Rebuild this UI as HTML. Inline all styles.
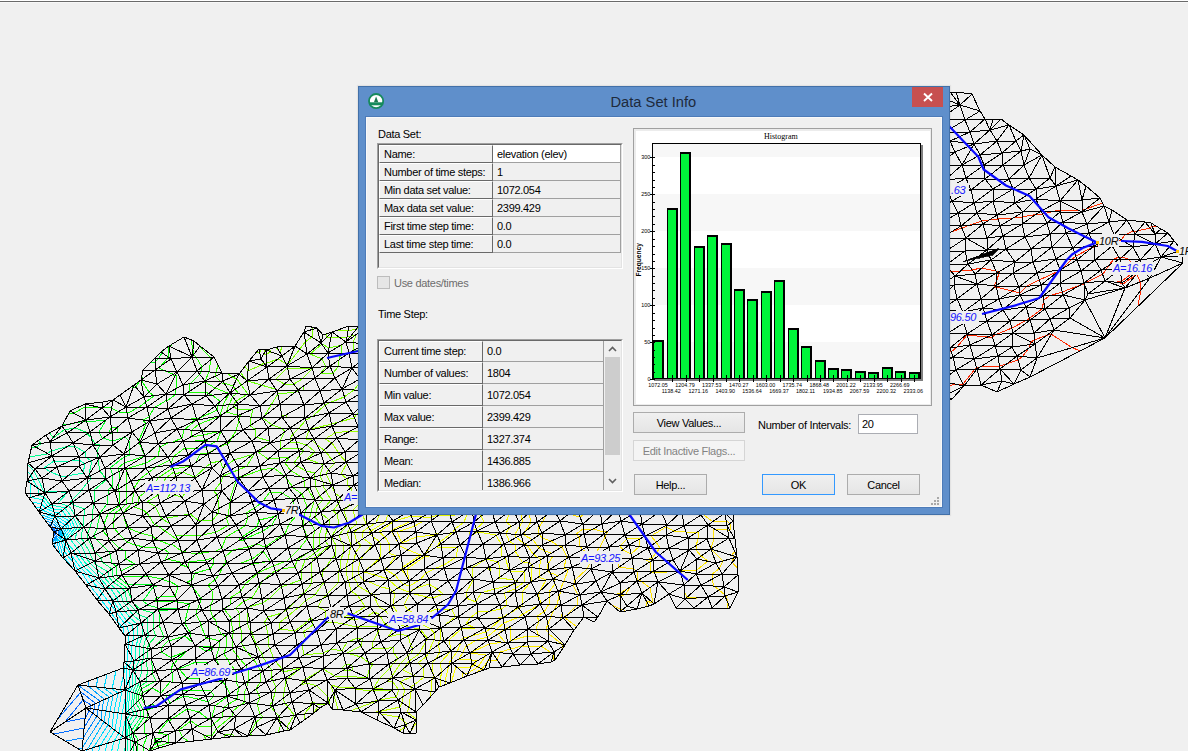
<!DOCTYPE html>
<html><head><meta charset="utf-8">
<style>
*{box-sizing:border-box}
html,body{margin:0;padding:0}
body{width:1188px;height:751px;overflow:hidden;background:#f0f0f0;position:relative;font-family:"Liberation Sans",sans-serif;font-size:11px;color:#000}
.a{position:absolute}
#topline{left:0;top:0;width:1188px;height:3px;border-top:1px solid #fff;border-bottom:1px solid #f8f8f8;background:#6a6a6a}
#mesh{left:0;top:0}
#dlg{left:358px;top:86px;width:592px;height:429px;background:#5f8fcb;border:1px solid #4270a8;box-shadow:0 0 1px 1px rgba(0,0,0,0.05)}
#client{left:366px;top:117px;width:576px;height:390px;background:#f0f0f0;border:1px solid #f9f9f9;box-shadow:0 0 0 1px #4d7bb8}
.t{position:absolute;white-space:nowrap;line-height:13px;letter-spacing:-0.3px}
.g{position:absolute;background:#f0f0f0;border-top:1px solid #a0a0a0;border-left:1px solid #a0a0a0;border-right:1px solid #fff;border-bottom:1px solid #fff}
.gi{position:absolute;left:0;top:0;right:0;bottom:0;border-top:1px solid #696969;border-left:1px solid #696969;border-right:1px solid #e3e3e3;border-bottom:1px solid #e3e3e3}
.btn{position:absolute;border:1px solid #acacac;background:linear-gradient(#f0f0f0,#e5e5e5);text-align:center;line-height:20px;letter-spacing:-0.3px}
</style></head><body>
<div id="topline" class="a"></div>
<svg id="mesh" class="a" width="1188" height="751" viewBox="0 0 1188 751" fill="none" stroke-width="1" shape-rendering="crispEdges">
<path stroke="#00beff" d="M86 757L86 775M96 687L98 678M96 687L109 697M86 757L86 752M106 711L109 697M56 549L54 543M61 529L61 529M61 529L61 529M86 752L87 750M104 722L87 750M104 722L106 711M60 536L54 543M61 529L60 536M61 529L60 528M53 521L60 528M53 521L44 518"/>
<path stroke="#00d5ff" d="M93 765L93 775M104 688L107 675M104 688L113 695M93 765L92 754M110 712L113 695M60 554L57 542M62 531L64 529M63 527L64 529M92 754L93 748M108 725L93 748M108 725L110 712M61 536L57 542M62 531L61 536M63 527L58 524M53 519L58 524M53 519L42 515"/>
<path stroke="#00e2ff" d="M99 774L99 775M112 689L116 671M112 689L118 693M99 774L98 755M114 712L118 693M63 556L59 542M63 533L67 528M65 525L67 528M80 578L76 572M98 755L100 746M112 727L100 746M112 727L114 712M62 537L59 542M63 533L62 537M65 525L56 519M54 517L56 519M40 512L40 512M54 517L40 512M40 512L40 512M40 512L39 512M64 557L63 556M64 557L74 570M76 572L75 571M75 571L74 570"/>
<path stroke="#0063ff" d="M85 718L65 722M83 700L65 722M91 705L83 700M90 708L91 705M90 710L85 718M90 710L90 708M55 533L54 535M55 531L55 533M52 529L55 531"/>
<path stroke="#006cff" d="M84 728L54 734M81 692L57 720M95 703L81 692M94 709L95 703M93 713L84 728M93 713L94 709M56 533L53 538M57 531L56 533M50 527L57 531M50 527L50 527M50 527L50 527"/>
<path stroke="#0086ff" d="M83 738L66 741M79 686L79 685M79 686L100 701M98 710L100 701M97 716L83 738M97 716L98 710M58 534L53 540M58 530L58 534M54 528L58 530M51 525L54 528M51 525L48 524"/>
<path stroke="#00a2ff" d="M82 748L78 749M88 686L89 681M88 686L104 699M102 710L104 699M101 719L82 748M101 719L102 710M59 535L52 543M60 530L59 535M58 528L60 530M52 523L58 528M52 523L46 521"/>
<path stroke="#8dff00" d="M338 504L341 500M342 651L347 642M323 669L323 669M358 638L347 642M369 401L368 404M369 401L372 398M373 391L372 398M379 377L373 391M363 638L358 638M288 616L299 607M288 616L279 623M331 559L335 556M326 568L322 572M331 559L326 568M305 601L299 607M266 354L271 352M368 404L357 414M380 376L379 377M362 346L362 343M362 346L367 346M280 629L279 623M280 629L295 631M306 639L303 632M313 625L312 621M313 620L310 618M313 620L312 621M308 621L310 618M313 625L303 632M308 621L295 631M323 669L335 676M347 653L361 646M347 653L361 657M368 662L361 657M324 582L323 579M324 582L324 582M323 579L322 572M340 497L341 500M340 497L335 493M271 352L269 349M264 349L264 354M264 354L266 354M332 424L339 422M381 375L380 376M383 362L382 353M306 679L323 669M304 680L306 679M304 680L301 685M328 697L329 701M305 719L304 714M371 663L368 662M373 664L371 663M369 670L373 664M369 670L367 678M315 595L305 601M315 595L324 582M382 353L378 348M378 348L367 346M335 556L336 545M331 537L336 545M382 367L383 362M382 367L381 375M326 474L331 484M326 474L328 470M339 422L354 418M354 418L357 414M302 645L306 639M304 655L302 645M330 706L329 701M317 704L327 704M310 704L312 705M304 714L312 705M362 641L363 638M361 646L362 641M339 524L337 514M332 536L339 524M365 331L365 329M361 329L365 329M365 331L364 338M364 338L362 343M333 511L337 514M333 511L338 504M317 445L312 440M326 452L332 460M306 439L312 440M324 450L326 452M324 450L317 445M332 487L335 493M323 653L304 655M323 669L323 669M323 669L323 669M332 649L342 651M323 653L332 649M317 686L328 697M313 702L317 704M307 683L317 686M307 683L301 685M313 702L310 704M347 676L367 678M335 676L347 676M335 463L332 460M328 470L335 463M331 537L331 536M331 536L332 536M337 330L348 331M309 430L306 439M309 430L311 429M332 424L311 429M359 328L361 329M359 328L356 329M356 329L348 331M331 484L331 485M331 485L332 487"/>
<path stroke="#9fff00" d="M352 500L348 507M375 401L374 412M375 401L388 390M360 626L377 627M377 627L378 629M379 629L378 629M340 569L338 571M357 627L360 626M388 390L389 389M374 412L372 414M325 619L325 623M326 611L318 607M326 611L325 619M325 623L333 622M343 624L333 622M343 624L357 627M338 571L338 572M339 582L338 572M351 488L352 500M347 485L351 488M392 353L392 353M387 377L389 389M389 389L389 389M331 685L333 692M393 664L390 668M392 690L374 688M379 679L374 688M390 668L379 679M327 594L339 582M318 607L322 599M326 596L322 599M327 594L326 596M391 352L392 353M391 352L385 344M377 343L385 344M377 343L370 340M343 554L344 546M341 541L344 546M392 354L392 353M387 377L389 371M390 366L392 354M390 366L389 371M364 427L358 432M372 414L369 418M364 427L369 418M334 695L338 709M333 692L334 695M322 707L318 707M318 707L314 712M385 649L372 648M378 632L373 642M372 648L373 642M378 632L379 629M393 664L398 659M394 653L398 659M373 690L392 690M347 485L347 479M341 474L347 479M341 559L340 569M341 559L343 554M372 331L372 324M359 323L372 324M372 331L370 340M338 452L340 455M350 431L358 432M350 431L335 433M332 443L338 452M325 439L335 433M332 443L325 439M393 647L385 649M394 653L393 647M354 688L338 687M338 687L331 685M355 689L370 691M370 691L373 690M355 689L354 688M347 462L347 461M347 463L347 462M347 461L346 462M347 463L341 474M340 455L346 462M341 541L339 535M348 524L339 535M344 510L348 507M348 524L344 510M348 524L348 524M348 524L348 524M358 323L359 323"/>
<path stroke="#ff2800" d="M1132 263L1128 259M1141 289L1140 282M1141 289L1138 306M1117 282L1123 284M1122 281L1117 282M1140 282L1137 274M1137 274L1123 284M1138 269L1132 263M1122 281L1138 269M1103 274L1085 283M1106 270L1109 265M1106 270L1103 274M1084 284L1085 283M1062 292L1083 284M967 335L987 337M1128 259L1122 257M1122 257L1119 257M902 426L903 425M903 425L900 411M899 338L890 346M904 334L899 338M1030 318L1027 320M1030 318L1042 309M1084 284L1084 284M1083 284L1084 284M1012 328L1027 320M995 335L1012 328M980 367L977 368M1114 259L1109 265M1119 257L1114 259M906 333L904 334M906 333L910 331M922 410L929 407M918 406L922 410M880 394L891 383M880 395L893 382M880 396L895 382M891 379L891 383M893 380L893 382M895 381L895 382M1044 300L1042 309M1049 296L1044 300M1049 296L1062 292M992 337L995 335M987 337L992 337M1006 364L1018 360M1000 366L1006 364M1000 366L980 367M891 361L888 347M891 361L892 362M888 347L890 346M924 381L921 379M917 380L902 379M917 380L921 379M967 335L957 347M951 352L957 347M977 368L975 369M963 384L975 369M963 384L957 384M885 407L883 407M886 408L900 411M885 407L886 408M908 394L913 401M908 394L918 385M913 401L918 406M918 385L924 381M930 403L929 407M1071 347L1080 351M1051 334L1071 347M1023 356L1018 360M894 372L891 379M897 372L893 380M897 378L895 381M894 372L892 362M895 364L897 372M902 379L897 378M947 350L951 352M878 411L881 419M880 410L883 419M882 409L885 418M884 408L887 418M931 396L930 403M931 396L942 387M942 387L957 384M1045 336L1034 340M1045 336L1051 334M1023 356L1029 348M1029 348L1030 345M1031 342L1034 340M1031 342L1030 345M942 347L947 350M882 432L883 436M884 433L884 436M886 433L886 435M887 433L887 434M882 432L882 422M884 433L884 421M886 433L886 420M887 433L887 419M881 419L882 422M883 419L884 421M885 418L886 420M887 418L887 419M880 394L875 396M880 395L877 396M880 396L879 396M878 408L878 411M880 408L880 410M882 408L882 409M884 408L884 408M878 408L876 400M880 408L878 399M882 408L880 397M884 408L883 407M875 396L876 400M877 396L878 399M879 396L880 397M933 336L935 340M935 340L942 347M933 332L926 331M933 336L933 332M910 331L926 331"/>
<path stroke="#00eeff" d="M120 690L124 673M120 690L122 691M105 772L103 775M105 772L104 757M118 713L122 691M64 551L61 541M101 600L110 611M111 613L110 611M64 535L69 528M67 523L69 528M99 597L101 600M89 584L82 573M91 587L99 597M91 587L89 584M111 613L118 622M124 634L123 627M121 626L123 627M121 626L118 622M104 757L107 743M115 730L107 743M115 730L118 713M64 538L61 541M64 535L64 538M56 516L67 523M55 515L54 515M56 516L55 515M42 510L54 515M41 508L42 510M41 508L36 507M67 555L64 551M67 555L73 562M82 573L78 570M78 570L73 562M124 673L124 668M124 668L124 666"/>
<path stroke="#ffe100" d="M608 531L606 534M727 599L728 608M726 595L727 599M564 617L567 615M564 617L577 627M578 316L573 318M638 438L641 436M641 436L648 426M711 549L711 549M711 549L711 549M723 561L711 549M719 569L723 561M592 557L582 549M619 596L620 596M626 476L628 464M751 453L751 454M751 454L751 454M726 595L725 595M714 586L712 579M713 529L714 539M711 548L714 539M711 548L711 549M794 454L795 456M794 454L790 451M713 522L727 521M728 530L713 529M730 530L728 530M578 595L573 585M600 547L605 537M600 547L592 557M605 537L606 534M650 588L641 581M626 594L630 587M620 593L630 587M641 581L638 580M637 572L638 580M573 318L576 322M576 322L583 328M630 451L629 462M638 441L638 438M630 451L638 441M602 221L614 210M649 394L652 392M647 402L649 394M681 330L689 334M696 346L689 334M709 346L715 347M695 348L696 346M695 348L688 356M707 376L701 373M707 376L721 375M719 590L725 595M714 586L719 590M794 462L795 456M786 481L778 483M786 481L791 471M790 451L776 456M765 478L778 483M587 569L592 559M587 569L575 580M575 580L574 583M574 583L573 585M578 595L578 596M577 605L567 615M578 596L577 605M653 603L650 588M653 603L646 601M646 601L646 607M617 594L619 596M620 593L617 594M619 567L633 569M637 571L633 569M637 572L637 571M594 338L612 342M597 306L578 316M613 223L614 210M613 223L607 228M689 213L673 218M700 207L712 204M569 248L575 248M573 225L579 224M720 345L722 343M723 357L720 345M718 358L715 347M706 366L718 358M733 358L736 362M733 358L723 357M717 341L709 346M722 343L717 341M646 406L647 402M652 392L655 386M649 380L655 386M649 380L666 373M695 302L700 309M694 297L700 293M694 297L695 302M689 322L681 330M692 319L689 322M700 309L692 319M688 356L691 365M701 373L686 373M691 365L706 366M677 374L686 373M677 374L666 373M752 453L751 453M759 455L752 453M733 169L733 168M770 155L770 158M628 463L628 464M629 462L628 463M700 513L688 507M702 514L700 513M704 515L713 522M702 514L704 515M712 574L719 569M712 574L712 579M772 458L776 456M783 466L794 462M783 466L791 471M766 471L765 478M730 524L730 530M730 524L727 521M685 500L688 507M685 496L685 500M685 496L677 494M657 492L667 493M667 493L677 494M637 484L641 486M637 484L631 481M621 596L626 594M621 596L620 596M616 558L619 567M614 557L616 558M611 554L614 557M611 554L595 558M592 559L595 558M603 532L608 531M607 228L594 235M579 224L585 229M591 231L585 229M591 231L602 221M583 328L587 320M598 307L587 320M601 323L594 338M622 319L601 323M691 210L689 213M691 210L700 207M558 236L556 242M568 244L569 248M556 242L568 244M644 413L646 406M648 426L645 420M644 413L645 420M757 178L757 185M737 183L746 190M737 183L733 169M766 158L770 158M749 173L757 178M746 190L733 203M732 204L731 204M731 204L712 204M730 225L734 229M726 220L717 221M726 220L730 225M714 229L714 238M710 225L717 221M714 229L710 225M764 466L766 471M751 455L759 455M764 466L772 458M751 454L751 455M613 501L612 499M634 488L641 486M651 498L657 492M651 498L640 504M619 497L634 488M580 546L582 549M598 306L601 304M598 307L598 306M597 306L589 298M586 294L589 298M591 287L586 294M609 296L601 304M598 292L609 296M598 292L591 287M594 247L589 249M589 249L575 248M594 247L596 244M594 235L596 244M612 342L623 331M623 331L622 319M654 211L663 218M663 218L673 218M649 208L631 204M651 209L654 211M651 209L649 208M721 375L729 374M781 203L777 207M749 164L740 166M749 173L749 164M755 160L766 158M770 185L757 185M770 185L775 187M741 229L746 226M734 229L741 229M702 273L706 279M707 249L714 238M707 249L707 250M616 501L613 501M624 506L640 504M624 506L616 501M615 497L612 499M626 476L619 482M619 482L631 481M615 497L619 497M591 509L588 501M580 517L591 509M580 517L569 514M594 529L603 532M583 529L594 529M583 529L576 534M579 537L580 546M576 534L579 537M730 371L736 362M729 374L730 371M777 190L775 187M781 203L783 198M777 190L783 198M733 203L733 203M733 203L732 204M766 208L777 207M753 207L766 208M753 207L746 214M746 214L745 223M746 226L745 223M706 285L706 279M700 293L706 285M707 260L707 250M704 264L707 260M702 273L704 264M570 509L569 514M575 504L588 501M575 504L570 509"/>
<path stroke="#ecff00" d="M438 356L439 353M509 570L509 570M509 570L510 571M524 572L510 571M431 517L439 515M502 545L501 544M438 356L431 364M423 372L431 364M509 570L505 557M501 556L505 557M501 556L502 545M524 582L524 572M524 582L515 589M442 672L440 679M451 651L440 663M442 672L440 663M451 651L451 651M423 426L423 425M423 429L423 426M491 314L490 317M490 305L491 314M423 517L431 517M423 517L411 516M439 515L451 516M455 529L453 532M456 557L458 547M444 565L456 557M436 568L444 565M389 565L386 570M395 521L411 516M395 521L393 522M424 390L421 378M423 425L422 425M414 415L422 425M414 411L414 415M423 372L420 376M420 376L421 378M570 412L567 410M449 640L461 629M449 640L451 650M451 650L451 651M417 603L416 603M417 604L416 604M419 604L417 603M419 604L417 604M416 604L416 604M416 604L416 603M455 450L455 461M433 446L428 442M453 450L433 446M424 439L423 429M464 522L455 529M440 542L453 532M458 547L442 548M437 547L442 548M440 542L437 547M426 573L436 568M420 580L409 586M420 580L426 573M403 584L409 586M390 545L385 537M423 395L424 390M418 405L414 411M423 395L422 400M418 405L422 400M504 593L506 599M515 589L504 593M470 618L466 624M491 611L501 609M506 606L501 609M506 606L506 599M440 679L441 686M454 450L455 450M454 450L453 450M455 461L455 461M460 472L455 461M490 317L487 320M476 328L487 320M476 328L472 330M454 341L439 353M459 339L454 341M472 330L459 339M492 300L490 305M424 439L425 439M425 439L428 442M469 537L470 531M476 529L470 531M469 537L478 532M399 580L395 575M399 580L403 584M386 570L395 575M571 413L570 412M478 612L470 618M478 612L491 611M461 629L475 628M475 628L466 624M465 472L460 472M477 496L476 490M498 267L498 266M498 267L499 279M499 279L499 280M501 544L496 535M496 535L478 532M396 556L389 565M389 553L396 556M389 553L390 545M566 413L567 414M567 410L566 413M479 474L477 483M479 474L465 472M477 483L476 490M477 496L474 508M468 512L451 516M464 522L468 512M496 265L498 266M496 265L483 256M493 291L492 300M493 291L499 281M499 280L499 281M476 529L484 522M571 424L567 414M575 422L571 413M575 423L575 422M574 425L575 423M572 425L571 424M572 425L574 425M476 509L481 516M484 522L481 516M476 509L474 508M379 532L385 537M393 522L379 532"/>
<path stroke="#faff00" d="M441 361L446 353M532 568L533 565M445 375L434 368M441 361L440 363M440 363L434 368M515 545L515 551M529 563L533 565M519 557L515 551M529 563L522 562M519 557L522 562M531 580L532 568M531 580L531 582M522 592L530 583M531 582L530 583M449 665L445 681M451 660L449 663M449 665L449 663M451 660L457 652M436 425L429 420M436 430L436 425M509 541L515 545M504 304L504 308M507 316L504 308M423 521L415 526M415 526L397 532M416 521L423 521M416 521L413 521M438 533L436 533M438 533L437 535M436 533L435 535M416 537L435 535M424 557L407 569M424 557L429 556M421 555L403 567M408 550L421 555M403 567L401 569M409 522L413 521M409 522L392 530M496 323L507 316M431 389L445 375M431 390L431 389M429 420L420 411M420 411L420 411M420 411L420 411M461 640L463 638M461 640L461 642M461 642L457 652M436 437L440 440M436 437L436 430M449 442L440 440M512 434L512 435M483 448L480 445M511 435L512 435M489 483L504 473M437 535L437 535M425 555L429 556M437 535L425 555M409 580L407 569M399 544L392 532M400 546L408 550M397 532L402 543M402 543L416 537M431 390L431 390M420 411L420 411M431 390L429 399M420 411L429 399M549 400L545 401M549 400L563 396M542 402L545 401M503 617L498 618M508 614L503 617M519 608L508 614M522 604L522 592M523 606L522 604M519 608L523 606M445 681L445 685M464 441L471 442M464 441L449 442M471 442L480 445M514 434L512 434M536 433L514 434M470 459L476 453M476 453L483 448M472 463L470 459M511 435L512 435M535 437L512 435M535 437L538 437M504 473L507 471M507 471L506 470M489 328L496 323M489 328L475 336M456 345L446 353M469 340L456 345M475 336L469 340M506 296L504 304M489 490L489 483M402 570L409 580M401 569L402 570M541 433L536 433M468 637L463 638M468 637L486 632M498 618L501 619M501 619L490 629M486 632L490 629M528 413L542 402M529 415L528 413M528 413L528 413M528 413L528 413M472 463L480 464M489 497L489 490M559 452L559 450M512 282L507 275M509 288L512 282M509 288L506 296M506 267L505 259M506 267L507 275M506 533L509 541M399 545L400 546M399 545L399 544M548 413L547 413M547 413L529 415M548 413L554 425M490 468L503 470M490 468L480 464M506 470L503 470M489 497L489 498M563 455L559 452M495 255L505 259M495 255L492 253M511 526L506 533M506 522L510 512M506 522L511 526M559 442L559 450M550 436L538 437M550 436L541 433M489 498L491 501M491 501L500 503M500 503L508 509M508 509L510 512M391 531L392 532M392 530L391 531"/>
<path stroke="#fffa00" d="M452 353L449 358M539 569L541 559M462 363L449 358M450 381L456 376M463 364L462 363M463 364L456 376M541 603L538 594M533 554L537 557M537 557L541 559M533 554L527 545M539 569L539 577M471 667L474 665M477 661L471 660M477 661L474 665M456 667L451 683M471 667L456 667M463 652L459 659M459 659L471 660M442 419L436 414M516 537L523 543M479 341L478 341M498 342L479 341M504 332L512 328M504 332L499 341M518 325L512 328M441 390L436 398M450 381L441 390M432 411L436 414M432 411L435 403M538 594L540 591M546 580L540 591M546 580L539 577M541 604L540 604M541 604L541 603M466 646L463 652M477 640L466 646M519 617L504 623M537 606L540 604M450 420L442 419M500 344L498 342M500 344L499 341M511 430L497 437M491 439L494 442M494 442L497 437M504 485L507 483M556 390L560 388M542 393L556 390M528 401L542 393M523 614L519 617M523 614L537 606M487 438L491 439M436 399L436 398M435 403L436 399M476 432L487 438M524 425L511 430M521 498L525 502M519 454L535 452M507 483L524 471M524 471L517 464M535 461L535 452M528 469L535 461M457 349L452 353M478 341L457 349M529 293L528 293M513 254L510 253M514 263L513 254M504 488L504 485M504 488L508 489M487 637L477 640M504 623L497 629M487 637L497 629M454 424L450 420M452 432L454 424M467 430L452 432M476 432L467 430M523 405L528 401M524 425L521 417M523 405L516 414M521 417L516 414M515 494L508 489M515 494L521 498M527 545L526 544M526 544L523 543M528 296L529 293M528 296L519 305M522 311L519 305M522 311L518 325M524 282L524 283M524 283L528 293M524 282L521 277M521 277L514 270M514 268L514 263M514 268L514 270M515 534L516 537M500 463L502 463M504 460L500 459M497 461L500 459M500 463L497 461M517 464L502 463M504 460L519 454M501 250L510 253M522 522L520 526M520 526L515 534M522 519L522 522M520 509L525 502M522 519L520 509M543 464L528 469M557 467L543 464M557 467L566 465"/>
<path stroke="#ff2b00" d="M1060 270L1061 270M1152 226L1158 227M1027 286L1039 280M1059 271L1039 280M1059 271L1060 270M1061 270L1062 269M1091 248L1076 256M897 298L893 299M918 297L935 288M897 298L918 297M904 307L897 306M881 334L883 332M882 344L882 347M882 344L881 334M893 301L893 299M935 288L935 288M972 270L961 271M1012 291L1020 293M1020 293L1027 286M1094 247L1091 248M1094 247L1097 246M1071 260L1062 269M1071 260L1076 256M1150 228L1152 226M900 309L904 307M899 310L900 309M899 310L901 324M883 332L901 324M879 391L888 383M887 376L888 383M893 301L893 301M893 301L897 306M935 288L951 271M935 288L935 288M961 271L951 271M996 287L1012 291M996 287L995 287M999 273L999 272M997 280L999 273M996 271L999 272M996 271L981 268M981 268L972 270M1137 231L1133 231M1137 231L1150 228M883 349L882 347M885 361L883 349M885 361L888 364M994 286L995 287M994 286L997 280M1113 240L1097 246M1125 235L1133 231M1121 240L1113 240M1125 235L1121 240M890 371L887 376M890 371L888 364M875 414L876 419M879 432L879 438M879 432L879 425M876 419L879 425M879 391L870 396M874 409L875 414M874 409L873 403M870 396L873 403"/>
<path stroke="#00ffe9" d="M114 601L114 601M117 766L111 775M117 766L116 760M66 541L66 540M119 610L114 601M66 539L75 528M71 519L75 528M105 589L104 588M105 589L114 601M105 589L105 589M96 580L94 576M96 580L104 588M120 612L119 610M132 625L133 630M127 621L132 625M127 621L120 612M116 760L120 739M125 721L125 715M122 736L120 739M125 721L122 736M126 713L128 691M66 539L66 540M66 539L66 539M66 516L71 519M62 510L53 509M66 516L62 510M48 507L53 509M43 500L48 507M30 497L43 500M30 483L31 493M30 497L31 493M27 478L28 479M128 691L130 688M125 715L126 714M74 551L68 544M75 553L74 551M68 544L66 541M133 636L133 630M133 641L133 636M133 641L132 645M131 657L131 661M131 657L132 645M126 714L126 713M126 714L126 714M94 576L84 567M76 555L84 567M76 555L75 553M29 481L28 479M30 483L29 481M129 680L129 669M130 688L129 680M129 667L129 669M129 667L131 661"/>
<path stroke="#00ffcc" d="M118 601L117 598M122 763L115 775M122 763L122 761M122 608L118 601M70 539L70 537M78 527L70 537M73 517L78 527M108 587L100 578M111 589L117 598M108 587L111 589M125 611L122 608M137 624L137 626M130 618L137 624M130 618L125 611M125 748L122 761M126 738L127 719M128 711L130 692M71 516L73 517M65 508L52 505M71 516L65 508M50 505L52 505M44 497L50 505M38 495L44 497M38 488L38 493M38 495L38 493M27 471L31 475M126 738L126 738M126 738L125 748M130 692L133 686M127 719L130 715M100 578L100 577M77 548L70 539M80 553L77 548M138 636L137 626M138 639L138 636M138 639L136 646M136 646L135 660M129 713L128 711M130 715L129 713M100 577L99 577M99 577L87 565M81 557L87 565M81 557L80 553M33 480L31 475M38 488L33 480M135 661L135 660M133 666L135 661M132 673L132 670M133 686L132 673M132 669L132 670M133 666L132 669"/>
<path stroke="#00ffaf" d="M123 601L121 595M126 765L119 775M127 763L126 765M127 763L127 761M126 606L123 601M75 539L77 532M81 527L77 532M58 503L68 492M76 515L76 516M76 516L81 527M110 584L104 577M116 589L121 595M110 584L116 589M130 611L126 606M133 615L141 622M133 615L130 611M142 623L142 622M142 622L141 622M127 736L129 722M131 708L133 692M85 464L79 460M70 461L79 460M76 515L76 515M76 515L75 515M69 506L58 503M69 506L75 515M54 461L70 461M54 461L44 468M61 492L68 492M28 465L34 471M128 739L127 736M127 758L127 761M128 739L127 758M133 692L136 684M129 722L133 715M104 577L104 575M81 545L75 539M85 553L81 545M67 476L60 476M47 491L61 492M83 473L85 464M67 476L83 473M142 625L142 623M143 635L142 625M142 636L143 635M142 636L139 647M139 647L139 657M133 712L131 708M133 715L133 712M104 575L97 570M97 570L90 563M87 559L90 563M87 559L85 553M51 472L60 476M47 491L44 492M51 472L44 468M38 479L34 471M44 492L38 479M139 660L139 657M136 670L135 675M136 668L139 660M136 668L136 670M135 675L136 684"/>
<path stroke="#00fe8e" d="M127 601L125 592M127 769L124 775M131 764L127 769M131 764L131 759M129 604L127 601M81 538L83 527M83 527L83 527M72 500L81 491M72 500L70 503M84 515L83 527M83 527L83 527M113 582L108 576M122 588L125 592M113 582L122 588M135 610L129 604M136 612L139 615M136 612L135 610M147 623L148 618M148 618L139 615M129 735L130 726M133 705L135 693M92 461L85 457M85 509L84 515M85 509L73 505M72 503L70 503M72 503L73 505M47 454L51 451M29 457L47 454M85 457L85 452M131 740L129 735M130 752L131 759M131 740L130 752M135 693L139 683M130 726L137 716M108 576L108 572M84 542L81 538M90 553L84 542M92 461L89 474M91 479L87 483M87 483L81 491M69 446L51 451M69 446L74 446M85 452L74 446M149 636L148 633M149 636L146 638M148 633L147 623M146 638L143 648M143 648L143 655M136 711L133 705M137 716L136 711M108 572L95 564M95 564L94 562M93 561L94 562M93 561L90 553M90 477L91 479M90 477L89 474M143 660L143 655M142 670L139 681M141 665L143 660M141 665L142 670M139 681L139 683"/>
<path stroke="#00fd59" d="M132 601L128 590M129 773L128 775M134 765L129 773M134 765L134 757M132 602L132 601M90 527L92 521M87 538L88 533M88 533L90 527M92 514L92 521M75 428L86 432M116 580L112 576M127 588L128 590M116 580L127 588M132 602L133 603M133 603L140 609M143 610L140 609M153 622L153 613M143 610L153 613M131 734L132 730M136 703L137 694M94 551L96 553M99 457L97 457M94 504L92 514M36 447L41 444M31 448L36 447M39 441L41 444M97 451L97 457M133 741L131 734M133 746L134 757M133 741L133 746M140 686L137 694M132 730L141 717M112 576L112 569M88 539L87 538M88 539L94 551M99 457L98 460M106 479L106 480M86 432L87 434M87 434L91 437M64 430L53 438M50 433L53 438M64 430L75 428M100 445L97 451M156 636L153 629M156 636L149 644M153 629L153 622M149 644L147 649M147 649L147 652M140 710L136 703M141 717L140 710M94 490L106 480M94 502L94 490M96 553L96 553M102 562L112 569M101 558L96 553M101 558L102 562M100 471L106 479M100 471L98 460M95 444L91 437M100 445L95 444M147 659L147 652M148 671L146 678M146 662L147 659M146 662L148 671M147 682L146 678M147 682L140 686M94 503L94 504M94 503L94 502"/>
<path stroke="#50ff00" d="M224 738L225 735M297 560L312 550M241 385L248 394M241 385L237 379M232 734L225 735M260 698L258 693M313 537L315 531M313 537L313 549M295 567L297 560M312 525L315 531M182 472L195 477M243 646L241 642M239 613L239 622M260 585L261 583M242 633L241 642M242 633L240 627M239 622L240 627M313 550L312 550M313 549L313 550M232 377L237 379M227 373L232 377M261 672L261 671M175 474L182 472M263 581L261 583M275 571L281 569M281 569L295 567M217 495L214 491M206 467L195 477M211 463L206 467M211 463L220 461M260 682L256 689M260 682L261 672M258 693L256 689M261 671L254 660M252 658L254 660M252 658L247 652M247 652L243 646M256 722L263 717M250 734L256 722M250 734L252 735M263 717L260 714M257 704L260 698M260 714L257 704M213 520L218 513M218 500L217 495M202 521L213 520M198 520L190 514M202 521L198 520M164 491L165 485M189 514L184 515M190 514L189 514M167 518L184 515M272 573L263 581M272 573L275 571M309 521L312 525M270 443L270 442M218 509L218 513M218 509L218 500M235 737L232 734M236 608L239 613M269 441L270 442M223 476L221 482M221 482L214 491M220 461L223 468M244 601L236 608M244 601L252 598M260 585L252 598M254 454L234 460M223 468L234 460M238 470L223 476M256 437L269 441M285 463L290 457M308 489L314 500M314 500L314 501M311 512L309 521M314 501L311 512M250 426L255 429M255 429L256 437M258 452L270 443M270 443L270 443M279 458L290 457M305 487L304 480M305 487L308 489M253 409L251 417M251 417L250 426M268 459L258 452M268 459L279 458M247 466L254 454M247 466L238 470M285 463L291 471M291 471L302 477M302 477L304 480M238 409L253 409M236 401L248 394M238 409L233 407M236 401L234 404M233 407L234 404"/>
<path stroke="#00fb25" d="M134 772L133 775M138 767L134 772M138 767L138 755M151 362L155 362M152 584L154 585M152 584L134 584M153 587L143 601M97 528L100 514M94 536L97 528M94 536L96 539M100 514L100 514M86 422L106 420M84 421L86 422M134 584L128 585M118 577L117 575M118 577L128 585M143 601L148 605M157 586L153 587M157 586L154 585M160 608L158 608M148 605L158 608M159 611L159 622M138 700L139 695M96 539L103 546M100 513L100 514M159 358L155 362M159 358L162 353M162 353L162 351M124 457L130 455M129 450L130 455M177 609L159 611M177 609L160 608M153 648L152 649M137 743L137 752M134 733L138 740M137 743L138 740M137 752L138 755M141 689L139 695M134 732L134 733M134 732L144 717M198 668L199 668M199 669L199 668M199 669L199 669M199 669L198 669M198 669L198 669M198 668L198 669M117 575L116 566M71 424L63 425M71 424L84 421M129 441L129 450M125 437L129 441M164 637L159 625M164 637L153 648M159 625L159 622M143 710L138 700M144 717L143 710M112 487L108 490M108 495L108 490M112 487L113 475M109 552L103 546M112 563L116 566M110 554L109 552M110 554L112 563M110 468L113 475M124 457L110 468M102 438L99 432M113 441L102 438M99 432L106 420M113 441L125 437M151 652L152 649M151 658L151 652M153 671L152 673M151 659L151 658M151 659L153 671M156 681L152 673M156 681L141 689M107 504L100 513M107 504L108 495"/>
<path stroke="#04fa00" d="M141 769L139 775M141 767L141 769M141 767L143 757M161 739L155 738M157 743L161 742M161 739L161 742M112 541L111 540M147 576L162 579M147 576L144 576M156 598L155 600M104 524L104 529M108 537L111 540M103 531L104 529M103 531L108 537M173 374L165 371M128 413L119 412M144 576L122 576M121 575L121 575M121 575L122 576M155 600L155 601M175 596L160 597M160 597L156 598M162 579L169 582M173 602L157 601M155 601L157 601M143 757L143 753M154 745L157 743M154 745L155 738M141 697L141 695M85 407L74 413M119 412L111 408M132 386L133 388M167 359L159 368M165 371L159 368M167 359L168 357M168 357L169 346M175 377L173 374M124 463L145 456M139 443L145 456M169 640L162 647M143 747L143 753M145 733L147 736M143 747L147 736M142 693L141 695M144 723L145 733M144 723L148 718M104 524L108 514M121 571L135 564M126 559L135 564M121 571L121 575M99 407L102 407M99 407L85 407M102 407L111 408M102 407L102 407M68 414L74 413M142 377L142 379M141 380L142 379M154 408L167 400M128 413L139 407M139 440L139 443M146 707L141 697M147 710L148 718M146 707L152 704M156 707L152 704M156 707L147 710M173 663L171 670M119 471L119 482M125 551L119 548M125 551L126 559M119 548L112 541M118 468L119 471M124 463L118 468M154 396L149 392M146 402L154 396M141 380L149 392M136 387L140 380M136 387L133 388M146 402L139 407M149 417L154 408M146 424L139 440M149 417L143 420M146 424L143 420M110 433L109 432M112 433L110 433M109 432L111 428M112 433L117 432M118 427L111 428M117 432L118 427M162 647L161 652M161 652L172 658M171 670L172 673M170 682L161 693M152 688L161 693M152 688L142 693M118 488L119 482M118 488L119 491M119 506L108 514M119 491L120 505M119 506L119 505M120 505L119 505"/>
<path stroke="#15fb00" d="M146 774L145 775M148 761L146 774M148 761L149 759M168 735L158 733M158 746L169 743M168 735L169 743M124 539L119 534M114 528L119 534M149 759L149 751M150 750L158 746M150 750L151 746M169 719L158 733M149 751L149 751M149 751L151 746M113 523L114 528M113 523L115 513M168 553L165 561M168 409L168 409M168 443L160 447M160 447L158 456M129 468L146 463M146 463L158 456M127 542L135 545M127 542L124 539M155 547L144 547M144 547L135 545M155 547L163 550M168 409L168 409M168 409L168 409M126 470L129 468M126 484L126 470M126 484L126 491M121 509L115 513M126 491L127 498M121 509L126 504M127 498L126 504"/>
<path stroke="#00fbff" d="M111 769L107 775M111 769L110 758M125 699L122 714M65 546L63 540M107 600L112 606M116 612L112 606M65 537L72 528M69 521L72 528M102 593L107 600M93 582L88 575M98 588L102 593M98 588L93 582M116 612L116 612M127 626L129 633M124 623L127 626M124 623L116 612M110 758L114 741M119 733L114 741M119 733L122 714M125 699L126 690M65 539L63 540M65 537L65 539M61 516L69 521M59 513L54 512M61 516L59 513M45 508L54 512M42 504L45 508M42 504L32 502M126 690L126 689M71 554L65 546M71 554L71 555M129 636L129 633M128 643L129 636M128 643L128 645M128 649L127 662M128 649L128 645M88 575L81 568M81 568L71 555M126 687L126 669M126 689L126 687M126 664L126 669M126 664L127 662"/>
<path stroke="#05fa00" d="M213 647L212 650M192 642L190 634M199 647L211 646M183 690L166 696M185 636L192 642M188 690L183 690M206 651L212 650M199 647L206 651M213 646L211 646M213 646L213 647M170 347L172 344M169 347L170 347M176 389L175 395M176 389L176 375M174 601L178 602M169 641L185 636M214 696L211 691M203 690L211 691M203 690L188 690M198 699L184 696M196 662L207 663M210 669L207 663M199 679L210 669M199 679L187 678M187 678L179 669M196 662L179 669M172 657L187 651M177 660L187 651M177 660L174 665M167 401L175 395M166 696L170 703M170 703L184 696M208 702L214 696M208 702L198 699M172 682L173 672M178 586L175 597M178 586L169 581M190 632L190 634M185 624L190 632M188 609L185 622M185 624L185 622M190 604L178 602M188 609L190 604"/>
<path stroke="#17fc00" d="M219 647L216 658M229 696L229 695M205 636L206 638M206 638L209 638M242 537L257 527M206 392L189 392M212 395L220 401M211 719L211 719M212 718L211 719M230 694L229 695M230 694L226 686M216 659L216 658M220 667L216 659M209 719L211 719M220 672L219 681M219 641L209 638M219 641L219 647M197 418L191 419M197 418L200 418M209 394L206 392M209 394L212 395M190 384L189 392M194 355L196 357M193 350L194 355M193 350L191 340M200 418L217 410M212 717L212 718M227 697L229 696M223 682L226 686M219 681L223 682M221 670L220 667M221 670L220 672M169 553L164 549M247 538L263 531M239 541L244 540M244 540L247 538M213 558L205 560M210 569L195 573M200 374L190 384M196 357L202 367M201 371L202 367M201 371L200 374M204 440L195 441M191 419L195 421M184 430L195 421M184 430L182 438M182 438L173 442M259 520L257 527M195 441L203 442M203 442L205 442M172 719L169 721M187 709L172 719M207 718L209 719M215 706L227 697M215 706L212 717M199 712L207 718M199 712L187 709M240 538L242 537M240 538L239 541M189 562L205 560M189 562L188 567M188 567L181 565M180 562L181 565M180 562L167 559M214 563L210 569M214 563L213 558M205 442L207 441M277 516L259 520M191 585L191 586M192 580L195 573M191 585L187 582M192 580L187 582M207 439L204 440M207 441L207 439M272 525L277 516M263 531L272 525M201 625L205 636M200 622L201 625M197 610L196 614M200 622L196 614M201 600L201 598M200 603L201 600M194 589L201 598M194 589L191 586M200 603L197 610M218 406L220 401M217 410L218 406"/>
<path stroke="#29fd00" d="M226 647L224 654M235 670L236 673M237 699L237 695M238 530L245 526M205 382L204 382M228 393L229 394M211 727L214 724M222 717L214 724M236 682L236 673M239 688L237 695M239 688L236 682M235 670L230 664M228 660L224 654M230 664L228 660M190 742L183 738M179 730L183 738M198 726L211 727M226 636L221 634M226 636L226 647M270 561L263 551M215 388L205 382M215 388L228 393M204 381L204 382M199 346L210 357M199 345L199 346M220 416L220 416M223 711L222 717M229 704L237 699M184 551L181 551M184 551L186 552M172 544L181 551M265 547L281 536M263 551L252 559M233 550L248 547M257 544L248 547M257 544L265 547M202 553L216 551M215 580L219 575M205 381L204 381M210 357L211 359M209 372L211 359M209 372L205 381M191 437L203 435M199 424L220 416M192 430L199 424M192 430L191 437M245 526L248 517M246 513L248 517M255 508L246 513M185 448L194 449M194 449L206 447M185 448L174 456M171 463L174 456M191 721L179 730M191 721L198 726M224 707L229 704M224 707L223 711M222 548L216 551M226 537L238 530M222 548L226 537M186 552L196 554M196 554L202 553M254 564L270 561M250 564L254 564M219 575L223 566M225 563L223 566M225 563L225 557M225 557L233 550M252 559L241 563M241 563L250 564M206 447L217 441M208 585L215 580M221 431L203 435M217 441L221 431M285 534L281 536M289 524L285 534M213 617L216 621M217 626L221 634M217 626L216 621M298 513L293 502M297 515L289 524M297 515L298 513M210 610L210 606M210 610L213 617M255 508L263 501M292 499L293 502M282 493L292 499M213 600L212 591M213 600L210 606M208 585L212 591M223 405L229 394M220 416L223 405M270 492L282 493M270 492L263 501"/>
<path stroke="#3bff00" d="M232 647L232 649M235 389L238 393M235 389L233 386M245 702L244 694M226 518L229 525M307 537L307 536M307 537L307 539M304 529L307 536M304 529L302 526M212 736L216 729M232 716L216 729M247 686L244 694M236 654L232 649M203 735L207 740M212 736L203 735M191 466L191 466M232 619L231 621M232 639L232 647M233 633L232 639M233 633L233 631M231 621L233 631M291 557L287 561M299 549L291 557M307 539L299 549M220 381L215 376M222 383L220 381M222 383L224 383M224 383L233 386M233 711L232 716M239 706L233 711M245 702L239 706M249 681L248 670M173 469L191 466M273 566L287 561M216 372L218 365M216 372L215 376M201 431L202 431M204 429L202 430M201 431L202 430M201 431L201 431M200 454L196 462M200 454L208 453M192 466L191 466M192 466L196 462M248 683L247 686M248 683L249 681M248 670L246 666M240 659L246 666M240 659L236 654M228 515L226 518M197 535L203 535M197 535L183 536M203 535L216 532M216 532L229 525M183 536L175 535M258 573L257 574M257 574L245 584M258 573L273 566M219 447L208 453M219 447L227 444M230 503L228 515M230 503L230 499M230 499L236 481M224 609L232 619M238 478L236 481M205 431L202 431M205 431L204 429M302 526L302 526M230 605L224 609M230 605L230 598M230 598L241 591M241 591L245 584M239 477L238 478M230 442L227 444M302 494L304 499M304 499L307 507M305 512L303 525M307 507L305 512M303 525L302 526M236 431L230 440M230 442L230 440M292 487L292 486M292 487L302 494M240 415L240 416M239 420L240 416M239 420L236 431M261 470L274 468M244 476L239 477M261 470L244 476M283 475L274 468M286 478L292 486M237 415L240 415M233 396L238 393M237 415L226 412M233 396L229 405M226 412L229 405M284 476L286 478M284 476L283 475"/>
<path stroke="#7aff00" d="M346 664L342 668M316 557L313 559M316 557L329 546M248 371L245 366M305 368L311 368M264 623L266 625M329 546L325 541M325 537L327 530M325 537L325 541M286 610L288 609M286 610L282 613M312 562L313 559M312 562L311 573M311 573L311 578M298 599L288 609M288 364L300 349M288 364L285 363M278 359L267 363M248 371L261 365M278 359L285 363M361 381L354 390M362 379L361 381M354 350L353 343M354 350L371 352M312 368L311 368M312 368L312 368M331 338L338 337M331 338L327 337M268 634L266 625M342 668L344 670M286 681L284 693M269 637L268 634M268 617L264 623M282 613L268 617M351 665L346 664M353 667L351 665M301 595L304 593M301 595L298 599M312 583L311 578M304 593L312 583M287 368L276 379M284 384L276 379M284 384L294 384M287 368L305 368M312 337L305 342M305 342L300 349M280 352L275 347M280 352L282 347M260 352L260 349M264 363L267 363M260 352L257 352M264 363L261 365M344 397L354 390M329 403L344 397M325 405L329 403M363 378L362 379M372 354L371 353M366 368L372 354M363 378L366 368M312 369L312 368M302 379L294 384M302 379L312 369M312 330L313 327M312 330L312 337M287 679L301 668M287 679L286 681M288 707L294 715M287 727L294 715M287 727L288 730M268 645L269 637M352 670L353 667M371 353L371 352M371 352L371 352M320 476L323 482M320 476L323 465M326 334L327 337M282 669L276 662M282 669L283 672M282 669L282 669M283 672L301 668M270 649L268 645M273 657L276 662M270 649L273 657M285 703L288 707M283 699L284 693M285 703L283 699M330 524L329 520M327 530L330 524M353 343L356 335M321 464L323 465M321 512L321 513M329 520L321 513M315 452L307 445M307 459L315 452M307 459L321 464M307 445L296 442M290 439L293 434M286 415L282 416M313 416L325 405M286 417L283 417M286 417L286 415M326 491L331 500M321 512L331 500M347 670L352 670M344 670L347 670M347 337L338 337M282 417L283 417M293 434L298 429M306 420L298 429M306 420L313 416M356 335L351 336M351 336L347 337M281 417L282 416M281 417L282 417M323 482L323 486M323 486L326 491M321 512L321 512M321 512L321 512M290 442L290 439M290 442L296 442"/>
<path stroke="#65ff00" d="M315 553L305 560M315 553L321 548M248 381L261 385M247 381L240 372M250 630L252 633M321 548L319 545M319 537L322 526M319 537L319 545M301 571L305 560M301 571L301 573M301 580L301 573M301 580L287 585M321 525L322 526M275 389L261 385M278 394L296 392M248 380L248 381M248 380L247 381M333 373L338 367M338 367L339 360M322 344L310 354M322 359L310 354M322 359L326 367M341 353L339 360M341 353L342 345M329 348L342 345M329 348L322 344M252 634L252 633M275 692L276 687M256 644L252 634M247 608L247 622M249 607L262 603M247 623L250 630M247 622L247 623M281 587L287 585M269 599L281 587M262 603L269 599M277 390L275 389M277 390L298 390M326 367L320 374M320 374L333 373M303 390L303 386M303 386L298 390M281 724L278 733M279 716L280 717M279 719L280 717M281 724L279 719M186 492L182 490M177 484L182 490M256 644L256 644M314 477L315 479M314 477L315 473M299 391L303 390M296 392L299 391M205 503L204 503M273 681L276 687M272 670L269 667M271 678L273 681M271 678L272 670M262 654L256 644M263 657L269 667M262 654L263 657M275 712L279 716M273 701L275 692M275 712L271 707M270 705L273 701M271 707L270 705M205 504L205 503M204 504L204 504M204 504L205 504M175 492L177 484M201 503L204 504M182 497L174 495M201 503L204 503M182 497L186 492M306 471L315 473M315 517L321 525M304 451L301 449M300 455L304 451M301 449L298 448M280 441L285 431M320 496L323 500M318 505L323 500M247 608L247 608M281 428L285 431M272 425L281 428M247 607L247 608M247 607L249 607M263 418L264 417M263 418L272 425M294 463L300 455M315 479L315 486M315 486L320 496M316 512L315 517M318 505L316 512M271 405L264 417M278 394L271 405M281 449L280 441M281 449L298 448M294 463L297 466M297 466L306 471"/>
<path stroke="#ffd300" d="M811 459L816 471M658 426L658 426M658 426L653 440M736 552L734 552M732 555L734 552M732 555L734 557M732 562L738 569M732 562L734 557M649 464L649 463M620 609L612 605M738 453L740 444M737 441L740 444M737 441L742 428M725 404L721 417M740 460L738 453M803 447L810 456M799 443L803 447M643 446L653 440M649 463L638 456M638 452L638 456M638 452L643 446M714 310L714 303M718 317L714 310M718 317L725 321M680 406L676 408M703 392L691 400M703 392L709 389M691 400L680 406M742 428L743 428M772 425L783 423M739 410L721 417M788 149L787 150M787 150L786 163M735 475L728 477M717 483L728 477M790 426L783 423M809 458L811 459M810 456L809 458M674 478L683 483M671 478L674 478M730 346L738 332M731 351L730 346M739 351L750 352M731 351L739 351M725 321L726 325M736 332L738 332M736 332L726 325M709 298L714 303M725 404L724 398M716 391L724 398M743 428L743 428M758 419L743 428M770 419L772 425M768 415L770 419M787 165L786 163M787 165L792 176M706 482L717 483M706 482L694 486M683 483L694 486M666 476L671 478M655 475L666 476M655 475L651 466M651 466L649 464M623 609L620 609M625 611L623 609M700 182L708 177M697 183L700 182M652 413L653 411M662 411L653 411M658 426L652 414M652 413L652 414M662 411L676 408M742 392L747 397M793 179L792 176M743 467L740 460M743 467L735 475M665 198L678 198M653 197L665 198M684 195L697 183M684 195L678 198M794 431L790 426M797 438L794 431M799 443L797 438M756 359L750 352M750 405L747 397M739 410L750 405M760 414L758 419M768 415L760 414M741 388L742 392M716 391L717 388M717 388L709 389M742 383L741 388M764 231L753 237M735 244L727 244M725 249L727 244M744 365L756 359M744 365L740 370M738 377L740 370M742 383L738 377M798 188L793 179M800 192L798 188M799 205L799 204M800 192L799 204M746 242L753 237M746 242L735 244M716 275L717 272M716 275L715 285M710 292L709 298M710 292L715 285M725 249L724 252M798 206L792 214M798 206L799 205M717 270L717 272M718 260L724 252M718 260L717 270M784 224L792 214M782 225L784 224M782 225L764 231"/>
<path stroke="#fff200" d="M548 564L553 556M539 316L540 313M547 569L548 564M524 353L522 341M541 326L539 316M540 332L522 341M452 388L464 376M468 371L464 376M550 596L549 592M539 548L545 551M539 548L537 545M547 569L547 571M468 673L478 667M486 655L470 653M486 655L478 667M463 673L462 678M468 673L463 673M470 653L470 653M470 653L470 653M489 644L470 653M505 642L489 644M505 642L498 634M543 329L540 332M543 329L541 326M550 359L542 366M550 359L566 358M484 366L468 371M484 366L485 365M507 411L516 401M519 394L516 401M519 394L527 389M450 389L450 390M452 388L450 389M555 584L549 592M547 571L551 573M559 576L551 573M549 604L544 612M549 604L550 596M470 653L470 653M470 653L470 653M511 626L505 629M544 612L537 616M510 641L510 630M527 636L510 641M510 630L511 626M536 629L539 621M537 616L539 621M466 411L466 409M487 365L485 365M487 365L507 358M524 354L507 358M524 354L524 353M509 426L501 430M527 389L527 383M530 378L535 373M530 378L527 383M535 373L542 366M539 636L536 629M539 636L527 636M463 409L444 408M445 400L450 390M444 408L445 400M463 409L466 409M489 422L491 421M490 422L501 430M490 422L491 421M515 424L509 426M525 269L523 264M541 293L533 288M521 251L511 247M522 260L523 264M522 260L521 251M505 629L503 630M503 630L498 634M472 420L466 411M472 420L489 422M515 424L513 420M504 414L507 411M513 420L504 414M525 487L524 487M525 487L527 489M526 486L524 487M551 553L545 551M537 545L533 540M524 535L533 540M537 303L537 306M541 293L537 303M537 306L540 313M530 276L531 282M531 282L533 288M530 276L525 269M524 535L525 532M510 247L511 247M531 522L525 532M536 495L527 489M539 497L536 495M529 513L531 522M533 501L539 497M533 501L528 508M529 513L528 508M545 473L542 473M547 473L545 473M547 473L566 470M526 486L542 473"/>
<path stroke="#ffeb00" d="M567 557L566 559M549 316L553 307M472 382L466 389M548 624L551 616M490 661L489 659M490 661L497 660M523 366L515 362M544 342L544 344M477 377L472 382M550 319L549 316M546 341L544 342M482 669L475 673M489 659L482 669M558 331L546 341M558 331L550 319M544 344L547 345M554 349L547 345M488 373L477 377M488 373L502 366M523 370L523 366M508 388L507 398M515 380L508 388M502 405L505 402M505 402L507 398M568 570L564 568M557 605L554 610M559 596L557 605M551 616L554 610M562 647L564 647M553 661L553 654M552 653L553 654M546 629L548 624M522 646L511 649M500 652L497 660M511 649L500 652M487 413L502 405M479 412L476 400M509 363L502 366M515 362L509 363M518 376L523 370M518 376L515 380M548 289L554 289M556 292L558 300M546 629L549 634M563 645L549 634M563 645L562 647M459 401L455 401M456 397L455 400M455 401L455 400M456 397L466 389M459 401L476 400M483 414L487 413M537 271L537 271M532 257L537 271M537 271L537 271M537 271L537 271M539 283L548 289M527 247L527 241M529 247L527 247M529 248L532 257M529 248L529 247M550 652L552 653M541 646L550 652M541 646L528 646M522 646L528 646M480 414L479 412M480 414L483 414M557 545L562 547M557 545L551 541M542 538L540 535M538 534L540 535M551 541L542 538M537 271L538 281M538 281L539 283M539 527L543 521M539 527L538 534M546 515L543 521M540 487L544 490M553 495L544 490M544 509L546 515M553 495L553 495M544 509L553 495M555 481L547 482M547 482L540 487"/>
<path stroke="#ffea00" d="M553 307L562 304M622 437L631 431M631 431L638 426M638 426L638 426M701 556L708 561M701 556L696 550M631 554L639 547M640 538L627 539M640 538L639 547M573 364L572 364M572 363L572 364M572 363L573 363M608 474L608 473M562 304L558 300M666 350L668 344M686 599L684 599M684 598L684 599M696 550L696 546M564 568L566 559M561 592L560 590M620 546L627 539M655 573L680 571M655 573L652 572M651 571L652 572M573 363L580 354M554 349L570 349M622 451L622 452M622 451L622 447M622 451L622 451M636 403L637 399M675 339L680 341M675 339L668 344M669 318L680 308M666 350L677 353M682 345L680 341M677 353L682 345M621 439L622 447M684 591L684 598M687 597L684 591M680 571L681 574M686 599L697 598M697 598L687 597M568 570L564 581M564 581L560 590M559 596L561 592M698 539L698 532M686 532L698 532M698 539L696 546M652 558L660 548M646 560L652 558M650 562L646 560M651 571L650 562M595 362L605 360M578 364L573 364M595 362L578 364M580 348L570 349M580 354L580 348M624 376L609 372M601 365L605 360M601 365L609 372M637 392L637 399M615 242L608 253M655 314L669 318M556 292L554 289M635 413L636 403M635 413L635 413M635 413L636 416M635 413L635 413M635 388L637 392M635 388L631 380M680 308L680 296M620 438L622 437M620 438L621 439M610 463L608 473M622 452L610 463M681 574L681 571M697 570L681 571M697 570L708 561M674 531L686 532M666 527L674 531M666 527L651 536M660 548L656 542M651 536L656 542M623 550L631 554M620 546L623 550M625 296L621 291M609 257L608 253M622 235L615 242M632 227L622 235M695 242L697 250M691 269L686 274M686 274L687 277M682 294L687 277M638 426L638 425M638 425L636 416M642 368L643 365M639 369L642 368M635 368L624 376M639 369L631 380M562 547L567 557M579 485L579 481M625 301L625 296M642 311L637 309M634 306L637 309M634 306L625 301M642 311L655 314M612 281L621 291M646 227L632 227M646 227L656 227M656 227L675 224M675 239L673 236M679 239L675 239M673 236L675 224M679 239L695 242M696 258L697 250M602 487L595 491M602 487L607 475M607 475L608 474M681 295L680 296M681 295L682 294M602 261L609 257M611 280L598 277M602 261L595 272M598 277L595 272M612 280L612 281M612 280L611 280M637 367L635 368M637 367L643 365M696 261L696 258M691 269L696 261M581 494L595 491M579 485L581 494M555 481L570 480M570 480L579 481"/>
<path stroke="#d1ff00" d="M490 571L491 567M394 307L400 310M426 657L429 653M407 712L409 708M407 712L416 719M424 677L423 668M411 313L400 310M422 315L411 313M489 566L488 567M384 300L391 304M391 304L394 307M491 567L490 566M490 566L489 566M429 653L429 651M419 623L431 629M414 622L405 618M419 623L414 622M414 685L424 677M410 687L414 685M409 708L411 691M452 279L453 279M405 466L404 461M488 568L490 571M488 567L488 568M410 389L409 387M417 359L420 354M419 352L413 344M419 352L420 354M412 342L413 344M401 424L404 426M403 412L401 424M409 376L407 379M407 379L409 387M375 299L384 300M368 296L375 299M418 663L423 668M418 663L426 657M412 689L411 691M412 689L410 687M431 629L434 633M434 640L434 633M434 640L429 651M405 618L399 615M393 606L399 615M393 606L393 604M411 731L416 723M410 733L411 731M410 733L410 733M430 310L422 315M430 316L430 310M424 319L430 316M420 330L424 319M420 330L412 340M412 342L412 342M412 340L412 342M453 279L443 271M453 279L452 279M442 270L443 271M401 439L402 438M402 438L404 426M409 473L405 466M382 496L380 499M395 593L393 604M392 591L395 593M410 393L410 389M403 412L407 406M407 406L400 402M410 393L400 402M417 359L414 365M414 365L409 376M403 441L408 448M408 451L408 449M408 448L408 449M408 451L404 461M401 439L401 439M401 439L403 441M400 480L397 485M382 496L397 485M400 480L409 473M390 589L392 591M390 589L381 587M381 587L367 581M367 581L365 581M372 545L364 555M476 279L476 280M476 279L474 278M472 281L453 279M359 575L358 572M360 560L358 572M359 575L363 580M365 581L363 580M361 559L364 555M360 560L361 559M374 505L380 499M374 505L377 510M475 281L472 281M475 281L476 280M453 279L461 265M473 279L453 279M461 265L462 264M473 279L474 278M376 523L380 513M377 510L380 513M369 527L362 532M363 538L372 545M362 532L363 538M369 527L376 523"/>
<path stroke="#deff00" d="M499 578L500 568M499 578L514 580M517 580L514 580M435 660L440 652M416 712L416 712M416 712L416 713M433 673L434 678M414 303L419 304M420 305L419 304M407 511L399 498M432 512L442 509M413 511L427 503M486 559L472 568M427 360L423 365M421 367L423 365M500 568L498 562M498 562L486 559M517 582L517 580M517 582L515 584M440 652L438 644M441 629L442 628M432 663L435 660M433 673L432 663M431 680L434 678M416 712L416 712M417 712L416 712M414 303L403 300M394 295L392 292M394 295L403 300M431 291L427 297M459 290L450 291M418 456L433 457M440 462L440 470M430 469L440 470M429 512L432 512M429 512L413 511M474 580L473 580M474 580L473 579M472 568L473 579M388 515L407 511M417 390L415 383M431 353L427 360M426 347L422 342M426 347L431 353M408 419L413 426M408 412L408 419M421 367L414 377M414 377L415 383M385 290L392 292M442 628L445 625M440 640L441 629M440 640L438 644M427 597L410 593M418 615L408 610M427 597L433 598M426 613L418 615M404 605L408 610M404 605L410 593M431 691L430 697M431 691L431 680M440 458L433 457M440 458L440 462M471 306L467 312M424 303L420 305M424 303L427 297M450 291L457 293M457 293L460 294M431 333L422 342M467 312L462 320M444 332L431 333M433 287L431 291M434 281L432 274M434 281L433 287M413 426L412 432M413 439L412 432M430 469L419 476M398 497L399 498M429 584L414 589M437 589L429 584M414 589L409 592M398 588L409 592M381 545L379 541M416 399L417 390M415 400L408 412M416 399L416 400M415 400L416 400M455 617L452 609M437 609L452 609M455 617L445 625M437 609L426 613M494 589L481 593M508 586L515 584M508 586L494 589M458 327L462 320M451 332L444 332M451 332L458 327M413 439L416 444M421 448L418 456M416 444L421 448M402 494L398 497M402 494L415 492M410 483L415 492M419 476L410 483M473 580L466 593M466 593L466 598M433 598L443 594M443 594L437 589M389 580L389 580M389 580L398 588M388 579L389 580M388 579L375 575M466 598L476 602M476 602L481 593M487 272L487 280M487 272L477 264M461 290L459 290M364 572L364 572M364 572L364 572M364 572L364 572M375 575L364 572M379 559L380 557M364 572L379 559M380 557L381 545M465 483L465 484M465 483L464 483M465 485L465 484M464 483L462 484M438 506L442 509M462 485L462 484M462 485L465 485M438 506L427 503M480 289L461 290M472 299L460 294M472 299L471 306M480 289L487 280M466 272L468 269M470 272L466 272M468 269L473 260M470 272L477 264M385 522L388 515M371 531L369 532M370 534L373 537M369 532L370 534M373 537L379 541M371 531L385 522"/>
<path stroke="#c2ff00" d="M386 314L397 318M397 412L388 405M388 402L388 405M388 402L391 400M358 586L370 593M390 617L391 620M391 620L398 624M357 582L358 586M400 707L402 703M414 676L414 675M391 400L403 389M376 305L376 305M376 305L386 314M385 610L390 617M379 607L385 610M379 607L374 596M419 629L421 630M404 626L398 624M419 629L404 626M413 676L414 676M400 682L413 676M402 703L403 696M397 318L395 324M397 330L395 324M391 465L390 462M390 474L391 465M391 478L390 474M410 354L405 346M401 378L401 382M403 389L401 382M376 305L376 305M360 299L376 305M403 670L413 675M407 664L403 670M414 675L413 675M405 690L403 696M405 690L400 682M421 630L427 638M427 639L427 638M427 639L426 641M404 721L407 724M406 726L407 724M406 726L405 727M404 721L398 717M405 727L399 731M397 330L406 332M402 342L405 346M406 332L402 342M389 438L392 432M393 426L392 432M397 413L397 412M397 413L393 426M379 491L372 499M374 596L374 594M408 359L405 365M402 371L405 365M408 359L410 354M402 371L401 378M409 661L407 664M409 661L419 654M426 641L419 654M390 462L390 461M389 447L389 438M391 449L390 461M391 449L389 447M385 486L391 478M379 491L385 486M374 594L372 594M372 594L370 593M354 559L353 563M356 552L354 559M356 552L361 545M353 577L352 571M352 571L353 563M353 577L357 582M361 510L365 506M362 513L361 510M365 506L372 499M379 711L376 712M379 713L376 712M382 711L400 707M379 711L382 711M398 717L381 714M379 713L381 714M364 525L366 524M366 524L362 513M354 532L364 525M357 542L361 545M354 532L357 542"/>
<path stroke="#b0ff00" d="M385 413L381 410M382 402L381 410M382 402L389 395M357 595L361 600M357 595L351 591M380 616L385 624M393 629L385 624M349 582L351 591M343 617L353 614M355 620L368 616M389 395L396 389M351 619L343 617M351 619L355 620M379 614L380 616M374 612L368 616M379 614L374 612M365 607L361 600M353 614L365 607M369 487L367 496M369 487L366 477M374 445L369 439M401 354L399 349M394 377L395 385M396 389L395 385M400 664L392 676M388 681L392 681M399 690L396 697M399 690L392 681M389 679L388 681M392 676L389 679M388 338L394 339M393 342L399 349M394 339L393 342M388 338L378 335M379 431L369 439M379 431L380 426M381 423L385 413M381 423L380 426M363 499L367 496M351 546L351 546M351 545L351 546M397 362L401 354M394 377L396 366M397 365L397 362M397 365L396 366M393 629L388 637M408 656L400 664M408 656L411 653M413 649L411 653M413 649L411 646M379 700L396 697M379 700L377 700M373 450L374 445M369 461L373 450M366 474L366 477M366 467L366 474M348 559L346 567M348 559L351 546M379 331L378 320M358 318L378 320M379 331L378 335M388 637L400 634M408 636L400 634M408 636L411 646M374 702L377 700M374 702L358 708M358 708L350 711M366 464L369 461M366 464L366 467M348 580L346 571M346 571L346 567M348 580L349 582M351 545L347 533M350 529L347 533M353 510L363 500M355 518L353 510M363 500L363 499M350 529L357 524M357 524L355 518M358 318L358 318"/>
<path stroke="#26fd00" d="M175 731L174 731M159 748L163 747M175 731L175 733M128 527L128 528M127 527L128 527M159 748L158 748M175 730L174 731M140 533L128 528M123 514L127 527M123 514L123 513M180 553L180 553M156 467L170 460M149 472L156 467M152 536L140 533M156 539L152 536M160 541L171 545M156 539L160 541M149 472L140 479M134 488L140 479M134 488L134 491M123 513L123 513M134 491L134 492M123 513L132 503M134 492L132 503"/>
<path stroke="#fff500" d="M616 429L621 426M596 381L586 378M578 376L565 378M555 366L555 373M555 366L558 362M617 412L612 404M601 384L596 381M609 387L601 384M607 450L607 447M555 578L555 579M554 581L555 579M586 378L582 376M582 376L578 376M613 391L612 402M613 391L609 387M612 404L612 402M665 273L660 265M650 248L644 242M616 415L617 412M620 422L621 426M616 415L620 422M557 379L565 378M597 436L616 429M597 436L607 447M604 453L607 450M640 284L652 280M652 280L665 273M633 289L630 286M633 289L640 284M634 249L633 246M637 243L644 242M637 243L633 246M650 257L650 248M641 261L634 249M648 261L660 265M650 257L648 261M547 556L548 556M628 283L630 286M587 462L604 453M587 462L586 465M656 296L657 296M657 297L656 296M657 297L657 297M657 296L658 296M657 296L657 297M657 296L658 296M630 274L628 283M638 264L641 261M630 274L633 270M638 264L633 270M566 469L580 464M580 464L586 465"/>
<path stroke="#ffe300" d="M560 621L561 617M562 614L561 617M555 257L554 257M555 257L555 258M554 257L551 244M544 235L544 235M551 243L551 244M551 243L544 235"/>
<path stroke="#ff3000" d="M1013 218L1022 217M998 219L989 220M998 219L1013 218M1038 214L1022 217M876 335L881 330M878 342L877 347M878 342L876 335M888 300L889 288M885 265L888 271M893 260L905 261M895 270L888 271M920 242L931 238M920 242L917 253M905 261L917 253M1051 212L1060 210M1060 210L1080 211M1043 214L1038 214M1043 214L1051 212M894 324L893 314M881 330L894 324M878 389L884 384M883 374L884 384M880 248L878 251M892 252L893 260M880 248L885 245M888 300L889 304M893 310L893 314M889 304L893 310M887 286L889 288M889 276L887 286M941 236L931 238M941 236L951 232M888 246L892 252M888 246L885 245M891 275L889 276M891 275L895 270M989 220L982 221M982 221L970 225M962 228L970 225M951 232L962 228M1082 211L1080 211M1082 211L1083 210M878 353L877 347M880 360L878 353M880 360L883 366M884 264L885 265M880 252L878 251M880 252L884 264M885 370L883 374M885 370L883 366M871 416L872 420M1083 210L1103 203M876 431L876 440M876 431L876 427M872 420L876 427M878 389L865 397M870 409L871 416M870 409L869 406M865 397L869 406"/>
<path stroke="#ffc500" d="M871 332L868 325M688 464L690 469M844 340L842 338M860 340L866 340M860 340L844 340M866 337L871 332M866 337L866 340M866 337L866 337M750 346L759 337M730 309L741 314M722 434L718 442M710 424L720 425M722 434L727 428M696 420L710 424M741 418L737 420M720 425L737 420M741 421L727 428M876 300L876 300M802 147L799 153M799 153L799 156M711 451L714 454M711 451L718 442M797 418L801 420M801 412L797 418M801 412L801 406M801 404L801 406M670 468L688 464M842 338L823 338M817 340L823 338M821 331L817 336M817 340L817 336M822 444L826 447M826 447L827 457M830 464L827 457M759 337L759 334M759 334L758 333M750 346L760 347M691 421L696 420M691 421L679 418M671 428L679 418M671 428L669 437M670 441L669 437M743 420L741 421M878 320L868 325M876 300L878 311M878 312L878 320M878 311L878 312M875 298L876 300M802 166L799 156M802 166L803 167M804 144L802 147M727 296L727 294M728 309L727 296M730 309L728 309M712 469L729 466M729 466L722 457M714 454L722 457M694 475L690 469M712 469L694 475M801 404L797 402M787 401L797 402M787 401L777 401M667 467L670 468M667 467L665 465M831 329L841 329M831 329L821 331M841 329L851 324M858 317L851 324M860 311L858 317M860 311L870 303M741 322L741 314M746 327L741 322M746 327L757 333M758 333L757 333M676 451L668 463M668 463L665 465M676 445L670 441M676 451L676 445M779 369L782 360M770 372L779 369M805 178L803 167M804 144L803 144M875 298L867 300M867 300L870 303M809 430L805 424M805 424L801 420M822 444L813 439M811 432L813 439M811 432L809 430M783 357L782 360M770 356L783 357M764 350L770 356M760 347L764 350M744 417L741 418M743 420L744 417M766 395L768 400M768 400L777 401M770 372L760 382M760 382L766 391M766 391L766 395M807 181L805 178M811 192L807 181M810 203L810 196M811 192L810 196M767 242L774 237M750 251L754 248M754 248L767 242M750 251L748 251M726 284L727 294M728 278L726 284M730 272L728 278M798 225L808 223M809 211L810 203M809 211L808 216M808 223L808 216M730 259L748 251M729 262L730 272M729 260L730 259M729 260L729 262M798 225L789 233M789 233L774 237"/>
<path stroke="#005aff" d="M54 532L54 532M54 532L54 532M54 532L54 532"/>
<path stroke="#ffb700" d="M834 347L831 345M868 337L879 325M869 338L866 349M869 338L868 337M831 357L834 347M807 354L817 347M807 354L803 359M796 347L800 339M796 347L784 349M803 363L803 359M700 430L692 441M708 443L710 437M710 437L700 430M879 300L879 297M868 276L868 276M705 447L708 443M814 407L814 411M815 397L814 407M831 345L827 345M827 345L817 347M800 337L801 335M800 339L800 337M801 335L799 335M792 324L797 321M812 311L812 306M797 321L812 311M881 324L881 322M879 325L881 324M772 340L771 336M771 336L767 328M772 340L777 345M790 329L792 324M790 329L799 335M803 363L809 363M814 379L809 382M824 362L809 363M819 372L814 379M824 362L819 372M692 441L688 452M688 452L705 447M778 379L780 382M774 385L780 382M879 300L880 309M881 311L881 322M880 309L881 311M871 286L879 297M871 285L871 286M868 276L871 285M821 156L821 155M822 167L821 156M816 145L815 147M821 155L815 147M753 306L754 309M741 296L738 287M753 306L745 300M741 298L741 296M745 300L741 298M812 395L815 397M809 382L808 387M812 395L808 387M867 352L866 349M818 420L814 411M754 309L753 322M754 323L767 328M754 323L753 322M774 381L778 379M749 271L757 267M867 275L868 276M847 272L842 274M852 272L867 275M852 272L847 272M828 285L842 274M824 178L822 171M822 167L822 171M816 145L811 141M859 359L867 352M859 359L850 364M831 360L831 357M831 360L842 365M850 364L842 365M819 423L818 420M838 439L826 431M826 431L826 431M826 431L826 431M826 431L819 423M840 443L838 439M844 451L846 456M840 443L844 451M780 348L784 349M777 345L780 348M774 381L772 382M772 382L774 385M820 207L823 202M765 265L757 267M740 279L749 271M812 306L819 299M819 299L819 294M819 289L819 294M819 289L828 285M819 226L818 220M822 200L823 202M824 178L826 184M823 192L826 184M823 192L822 200M769 268L765 265M781 267L769 268M738 284L738 287M740 279L738 284M820 207L818 217M818 217L818 220M786 257L784 251M791 247L784 251M783 263L781 267M783 263L786 257M798 248L791 247M819 234L821 239M819 226L819 234M816 250L798 248M816 250L821 239"/>
<path stroke="#ff2e00" d="M891 287L893 286M878 335L882 331M880 343L879 347M880 343L878 335M891 300L891 287M898 324L896 311M882 331L898 324M879 390L886 384M885 375L886 384M891 300L891 302M896 310L896 311M891 302L896 310M880 351L879 347M883 360L880 351M883 360L885 365M887 371L885 375M887 371L885 365M873 415L874 420M877 431L878 439M877 431L877 426M874 420L877 426M879 390L868 397M872 409L873 415M872 409L871 405M868 397L871 405"/>
<path stroke="#ffa900" d="M870 336L880 326M871 339L869 348M871 339L870 336M832 376L828 383M777 321L775 322M881 300L881 295M873 275L872 273M835 157L829 151M837 163L835 157M829 388L828 383M850 373L847 385M850 373L832 376M777 321L796 310M798 309L798 307M796 310L798 309M885 324L884 320M880 326L885 324M877 386L878 385M877 370L878 385M881 300L882 308M884 311L884 320M882 308L884 311M875 286L881 295M875 282L875 286M873 275L875 282M842 174L842 180M840 168L837 163M842 174L840 168M826 145L829 151M826 139L826 145M765 298L768 310M764 298L765 298M764 298L765 296M872 359L869 348M872 360L872 359M872 360L877 369M835 395L834 398M835 395L829 388M847 385L845 392M768 310L767 314M767 314L775 322M794 299L798 307M860 263L843 263M866 264L872 273M866 263L866 264M866 263L860 263M841 262L843 263M833 240L833 239M819 138L818 138M819 138L826 139M830 216L840 205M827 258L841 262M877 370L877 370M877 370L877 369M848 430L849 431M848 430L849 430M855 442L855 449M849 432L849 431M855 449L856 451M866 420L866 420M851 429L849 430M836 408L834 398M839 412L836 408M839 412L844 412M833 239L833 239M779 291L765 296M787 289L779 291M842 201L840 205M829 226L830 216M833 239L831 236M868 424L851 429M856 438L855 442M856 438L849 432M868 424L866 420M864 393L858 392M864 393L877 386M845 392L858 392M865 417L853 415M853 415L844 412M865 417L866 420M793 297L794 299M793 297L787 289M829 227L829 226M836 193L842 201M837 191L842 180M836 193L837 191M836 193L836 193M796 262L795 264M796 261L796 262M795 264L798 264M801 262L798 264M829 228L831 236M829 227L829 228M798 262L796 261M798 262L801 262M830 252L833 240M830 252L827 258"/>
<path stroke="#ff6e00" d="M872 336L880 327M873 340L871 348M873 340L872 336M845 212L855 202M884 300L884 293M878 275L876 270M837 147L844 154M844 154L849 145M888 324L887 318M880 327L888 324M878 387L880 385M879 371L880 385M884 300L884 306M887 311L887 318M884 306L887 311M879 286L884 293M880 279L879 286M878 275L880 279M875 156L873 154M870 145L868 141M870 145L873 154M836 145L837 147M836 133L836 145M862 127L857 131M857 131L868 141M856 131L862 127M849 145L855 132M855 132L836 133M836 132L856 131M874 357L871 348M874 360L874 357M874 360L879 368M855 255L863 255M872 264L876 270M870 260L863 255M870 260L872 264M852 242L848 252M848 252L855 255M852 242L853 239M864 168L860 177M864 168L871 162M871 162L875 156M843 214L845 212M880 370L879 371M880 370L879 368M868 419L868 420M857 226L855 235M855 235L853 239M857 184L858 192M855 202L858 192M843 214L843 216M843 216L849 219M872 430L873 442M872 430L872 429M868 420L872 429M878 387L861 397M866 409L868 419M866 409L866 409M861 397L866 409M857 223L857 226M857 223L849 219M858 181L860 177M857 184L858 181"/>
<path stroke="#ff3200" d="M874 335L881 328M876 341L874 348M876 341L874 335M886 300L886 291M884 275L880 268M883 116L879 130M891 324L890 316M881 328L891 324M878 388L882 384M881 373L882 384M876 242L867 251M876 242L892 230M886 300L887 305M890 310L890 316M887 305L890 310M883 286L886 291M885 277L883 286M884 275L885 277M892 230L896 231M887 149L884 145M884 144L879 134M884 144L884 145M887 149L892 144M879 130L877 133M877 133L879 134M876 355L874 348M877 360L876 355M877 360L881 367M868 231L875 234M875 234L890 228M891 217L890 228M881 211L891 217M878 264L880 268M875 256L867 251M875 256L878 264M902 132L892 144M902 132L903 130M905 129L903 130M882 370L881 373M882 370L881 367M869 418L870 420M869 226L868 231M874 431L874 441M874 431L874 428M870 420L874 428M878 388L863 397M868 409L869 418M868 409L867 408M863 397L867 408M871 219L869 226M871 219L881 211"/>
<path stroke="#ff2a00" d="M883 334L883 333M885 345L884 346M885 345L883 334M904 321L904 324M883 333L904 324M879 393L890 383M889 378L890 383M885 348L884 346M888 361L885 348M888 361L890 363M892 371L889 378M892 371L890 363M876 413L879 419M881 432L881 437M881 432L881 424M879 419L881 424M879 393L872 396M876 408L876 413M876 408L874 402M872 396L874 402"/>
<path stroke="#37fe00" d="M173 468L158 478M143 510L147 513M149 516L147 513M149 516L154 524M134 507L143 510M155 484L158 478M147 491L139 497M147 491L155 484M158 526L154 524M165 531L158 526M165 531L178 540M138 502L134 507M139 497L138 502"/>
<path stroke="#4aff00" d="M174 472L166 478M147 502L155 506M160 516L155 506M160 516L162 519M158 495L147 502M160 491L158 495M166 478L160 488M169 523L162 519"/>
<path stroke="#5dff00" d="M175 476L174 477M171 492L167 499M174 477L173 479"/>
<path stroke="#ffff00" d="M585 402L582 392M585 402L587 404M562 393L582 392M590 406L587 404M598 415L597 412M590 406L597 412M597 426L600 424M599 423L600 424M598 415L599 423M583 448L584 449M583 449L584 449M583 449L569 461M597 426L581 437M581 437L583 448M566 462L569 461"/>
<path stroke="#000" d="M362 500L341 510M225 680L227 696M391 403L415 400M703 239L682 247M600 509L583 524M449 327L432 343M752 393L757 406M495 252L512 246M1024 135L1030 149M843 409L822 421M366 510L367 524M530 247L535 255M970 132L974 144M723 236L707 249M237 416L262 418M1042 155L1029 178M621 521L604 534M928 337L950 348M125 714L133 733M961 226L983 224M1045 309L1069 308M534 508L554 510M1030 149L1042 155M735 539L737 557M695 417L700 429M553 243L555 257M262 418L282 417M112 432L132 432M805 166L790 179M654 343L634 355M645 536L629 545M1114 235L1135 234M708 525L729 538M560 521L583 524M737 557L738 575M742 179L750 190M314 713L300 723M609 547L592 558M826 431L849 430M666 535L648 548M668 258L673 272M584 617L563 618M384 438L363 451M970 345L953 357M861 190L863 203M597 424L597 436M349 326L346 342M673 560L654 571M849 430L872 430M730 608L725 596M377 720L379 712M673 272L653 285M410 663L428 663M617 353L620 365M517 268L537 271M125 690L133 670M278 451L280 463M598 617L594 622M434 462L441 471M723 441L744 440M537 271L563 270M465 363L448 375M146 709L168 705M499 280L522 283M364 572L345 582M202 610L182 624M629 545L648 548M1014 384L1021 370M434 281L435 291M177 600L178 609M621 451L643 452M223 381L206 396M733 168L728 190M486 366L469 376M522 283L543 280M419 619L441 628M429 579L409 593M697 559L716 563M455 461L441 471M1020 295L1003 310M854 226L832 239M629 476L611 487M935 370L941 381M195 646L172 660M941 381L921 395M542 462L566 461M292 702L277 718M483 292L502 290M166 394L168 409M269 488L252 502M130 588L153 585M605 224L611 235M397 474L402 484M1003 310L1010 321M1002 153L1021 151M936 108L960 105M492 497L472 509M593 486L596 497M482 471L504 471M451 651L428 663M618 305L624 318M125 714L150 718M580 595L601 592M184 395L192 404M461 306L486 306M880 396L884 408M630 221L634 235M198 600L222 599M509 498L491 508M1010 321L992 335M589 236L593 246M491 508L495 522M624 318L607 330M182 624L208 621M899 394L905 407M471 316L493 317M737 404L741 420M286 609L307 606M611 235L619 248M794 192L816 192M75 571L95 561M663 250L644 261M519 522L521 535M513 509L519 522M361 331L365 344M528 413L508 423M776 492L758 489M449 327L471 328M757 406L762 419M910 156L893 167M128 418L112 432M503 618L525 617M682 247L668 258M649 210L671 214M537 522L542 533M132 432L124 454M542 533L542 545M268 428L290 428M962 165L945 180M397 426L384 438M284 731L290 730M471 328L498 328M413 342L432 343M512 435L494 448M504 544L508 556M844 420L826 431M194 741L176 743M877 178L861 190M875 226L893 228M565 535L565 545M140 442L158 444M116 551L119 564M448 508L472 509M299 658L324 656M270 443L278 451M432 343L454 339M900 181L883 191M426 276L434 281M407 449L413 460M569 557L572 567M435 353L421 366M178 540L197 540M214 357L222 373M185 562L191 573M295 438L299 451M887 346L893 361M200 684L225 680M1013 189L993 201M307 354L328 353M52 544L66 540M975 274L977 284M802 144L804 153M981 385L1000 369M904 425L905 407M201 551L223 551M665 199L649 210M582 272L589 283M552 366L573 363M352 368L360 379M764 360L745 369M194 341L192 357M292 702L313 704M431 447L413 460M954 285L938 301M1017 356L1037 358M693 212L676 224M685 201L671 214M584 462L565 472M272 561L292 561M250 622L250 634M169 346L171 359M567 279L549 292M1000 369L1002 381M378 367L381 376M773 457L792 456M358 318L358 327M715 215L696 224M346 462L353 476M877 369L897 372M402 484L384 498M420 303L404 319M856 131L881 133M133 733L153 733M835 384L839 395M328 596L307 606M525 471L526 487M527 293L532 307M689 464L711 463M303 667L285 678M448 375L452 389M182 683L161 696M520 665L513 654M706 383L731 383M440 303L422 316M763 227L765 237M871 167L893 167M343 653L347 668M629 476L653 477M200 684L183 694M190 718L175 731M320 391L304 405M400 640L407 653M926 132L910 144M402 497L409 511M1150 278L1161 257M584 391L602 391M252 502L274 500M743 237L750 251M925 191L947 189M870 120L856 131M510 316L520 328M86 585L99 578M498 328L499 341M593 486L611 487M168 409L150 421M737 557L716 563M819 145L804 153M640 510L621 521M782 213L803 215M574 498L596 497M529 240L546 234M574 245L577 258M624 259L605 272M839 253L820 261M803 215L824 217M667 525L645 536M439 411L444 424M1000 226L1022 224M688 538L689 550M822 156L829 168M1055 167L1071 176M593 246L600 257M802 144L819 145M1029 178L1013 189M699 346L677 357M1022 224L1047 223M309 430L314 439M266 548L272 561M573 423L597 424M419 630L407 653M738 592L730 608M790 179L794 192M648 548L632 558M718 345L702 356M177 429L202 431M1024 135L1021 151M331 537L351 532M530 247L553 243M230 453L220 476M336 559L340 571M426 439L407 449M446 435L468 438M902 190L909 204M1120 259L1120 269M810 178L816 192M561 450L542 462M716 563L696 574M153 585L157 600M352 546L375 545M150 760L141 768M577 258L600 257M660 354L664 369M239 478L231 502M446 435L431 447M403 569L409 581M345 452L363 451M1120 269L1105 281M1030 377L1037 358M461 306L449 327M952 399L944 396M975 274L997 273M478 458L482 471M582 448L566 461M453 279L459 291M424 555L443 558M169 575L192 585M719 284L701 299M582 272L605 272M456 594L436 605M510 366L491 378M188 633L171 646M247 608L229 621M222 373L223 381M345 452L346 462M353 476L333 485M484 670L492 652M260 466L280 463M306 681L290 693M502 462L504 471M474 280L483 292M574 306L556 315M269 379L250 395M396 618L377 629M489 567L510 570M473 592L458 606M682 295L687 308M99 578L122 575M600 377L602 391M574 630L549 629M1063 295L1045 309M103 402L102 408M310 487L315 500M856 385L877 385M242 597L247 608M893 228L875 240M673 476L656 486M236 647L214 659M70 411L86 420M553 579L576 584M527 293L549 292M475 389L458 400M548 641L554 652M170 587L192 585M1045 309L1050 319M533 498L513 509M1050 319L1054 330M731 392L752 393M915 228L901 237M75 516L61 529M492 652L472 664M620 595L642 593M670 320L674 330M511 303L532 307M230 393L238 404M110 417L128 418M27 481L42 478M631 204L648 198M553 495L534 508M589 403L609 404M478 399L482 412M106 529L90 538M229 621L250 622M955 152L962 165M799 337L806 348M554 510L560 521M730 248L730 261M132 538L116 551M250 622L271 623M568 413L551 427M444 424L446 435M485 628L505 630M797 406L805 418M980 155L984 165M923 180L925 191M750 251L754 261M583 524L584 534M140 564L122 575M125 690L143 696M592 415L573 423M505 630L528 629M535 255L517 268M304 332L321 343M637 609L620 612M612 343L617 353M537 271L522 283M945 180L947 189M558 437L540 450M161 562L146 574M604 534L609 547M865 349L887 346M213 576L192 585M467 424L446 435M343 653L365 653M479 341L499 341M555 257L537 271M266 350L282 356M597 436L622 438M577 437L561 450M150 760L147 775M637 609L649 606M480 354L465 363M710 199L715 215M232 573L218 586M741 357L764 360M337 438L345 452M809 360L809 370M245 683L266 682M1056 186L1036 199M1013 273L1019 287M301 462L286 475M474 448L478 458M494 448L517 449M249 361L259 349M483 292L461 306M302 584L284 598M611 280L612 297M113 400L102 408M596 364L620 365M1105 338L1125 288M406 379L388 389M525 617L505 630M399 364L406 379M125 690L125 714M664 369L645 380M391 606L377 616M356 704L378 701M996 286L981 299M738 213L719 225M413 460L434 462M696 574L701 585M502 290L486 306M82 775L82 751M157 384L166 394M290 622L295 633M461 306L471 316M371 595L370 607M421 366L424 375M424 375L448 375M158 609L163 622M546 616L528 629M358 641L343 653M263 477L269 488M719 284L743 284M756 216L740 226M353 476L373 472M486 306L493 317M905 130L926 132M877 385L880 396M390 593L391 606M730 466L754 468M347 668L327 680M381 642L365 653M236 716L234 729M225 680L206 696M682 295L701 299M464 484L447 498M161 696L146 709M809 225L813 238M310 487L333 485M493 317L471 328M915 165L937 166M677 500L661 511M752 393L737 404M249 703L255 717M673 476L691 477M245 683L227 696M661 307L687 308M970 132L950 141M447 498L448 508M297 498L315 500M774 397L757 406M971 190L993 189M682 511L684 526M377 616L396 618M990 130L974 144M553 243L535 255M670 320L689 321M964 323L967 334M315 500L337 500M863 145L846 158M948 333L950 348M301 513L321 512M813 238L816 251M632 403L611 416M125 636L145 635M708 525L707 539M824 217L845 214M564 331L567 343M884 408L905 407M718 419L700 429M211 648L236 647M668 258L651 273M649 606L642 593M321 512L341 510M882 251L866 263M727 526L729 538M482 412L489 422M741 420L721 428M597 424L577 437M470 653L492 652M901 237L918 239M691 261L673 272M689 550L697 559M574 630L563 618M348 524L367 524M1063 222L1087 224M737 557L711 549M614 425L597 436M468 438L474 448M370 679L393 678M965 251L987 250M361 712L379 712M763 345L741 357M122 575L130 588M372 533L392 531M574 245L593 246M893 361L912 357M494 438L494 448M393 678L413 676M1014 384L1000 369M211 718L236 716M1015 262L1033 262M146 574L153 585M863 203L845 214M399 544L417 543M192 585L198 600M212 468L220 476M317 328L323 335M495 594L500 605M745 369L769 370M286 609L290 622M236 716L255 717M621 451L606 463M391 295L398 304M1013 273L1037 273M893 216L875 226M218 586L222 599M466 557L486 559M315 378L320 391M439 615L441 628M573 363L579 378M579 378L600 377M307 606L311 621M229 633L211 648M397 474L377 488M649 210L655 222M100 775L125 762M532 307L520 328M542 462L545 474M183 385L205 381M120 395L126 407M996 286L1019 287M956 370L941 381M593 486L574 498M618 305L599 320M528 567L549 570M275 645L282 657M724 296L728 310M184 395L168 409M515 592L500 605M630 221L611 235M452 389L475 389M417 472L402 484M354 485L362 500M370 679L355 688M611 487L596 497M382 317L384 330M896 382L917 382M961 226L966 238M640 307L624 318M574 498L576 508M549 570L572 567M766 177L790 179M263 671L266 682M899 394L884 408M140 682L143 696M304 405L324 403M377 488L384 498M611 235L593 246M513 509L495 522M404 319L409 330M27 481L25 493M671 394L676 406M361 331L346 342M596 497L600 509M836 132L856 131M123 513L106 529M620 583L637 581M921 395L905 407M710 199L732 204M757 406L741 420M324 403L346 402M881 133L885 144M634 235L619 248M150 421L171 418M665 192L682 186M537 522L521 535M384 330L365 344M151 527L132 538M708 597L725 596M780 407L762 419M611 416L614 425M303 526L306 537M171 418L197 420M865 421L888 418M1002 153L1003 165M565 535L542 545M361 712L378 701M772 250L779 263M964 323L987 321M116 551L95 561M474 522L495 522M290 622L311 621M635 413L638 426M489 422L494 438M124 662L133 670M1021 151L1024 165M584 534L565 545M577 258L582 272M138 550L119 564M185 562L169 575M887 346L871 359M295 438L278 451M500 533L521 535M361 712L343 710M508 423L512 435M426 276L435 291M764 431L785 430M600 257L605 272M607 601L598 617M985 179L993 189M582 272L567 279M824 467L830 445M524 354L532 365M207 563L191 573M908 348L893 361M524 545L542 545M70 411L85 404M622 438L603 450M642 438L662 441M605 272L589 283M1125 288L1088 294M378 367L360 379M276 573L259 583M214 357L197 371M542 545L565 545M592 558L612 558M346 462L331 473M517 449L523 460M540 450L561 450M525 471L508 486M277 347L295 346M774 202L782 213M527 293L511 303M434 281L453 279M782 213L784 225M345 582L328 596M448 375L431 390M563 618L549 629M612 558L632 558M371 464L353 476M125 738L125 762M436 605L419 619M1060 283L1063 295M803 215L809 225M850 373L856 385M455 461L478 458M549 292L532 307M545 474L526 487M511 303L510 316M391 295L412 294M409 593L417 604M469 376L452 389M145 635L151 649M773 311L751 324M680 571L696 574M389 664L393 678M400 640L387 653M763 286L787 286M310 478L310 487M546 234L530 247M266 682L271 692M910 156L933 154M508 486L509 498M397 474L417 472M532 307L537 316M510 316L498 328M376 305L398 304M426 639L407 653M113 601L132 601M502 667L492 652M285 678L290 693M724 296L744 296M206 696L186 705M354 485L377 488M537 316L520 328M816 396L820 407M382 317L404 319M410 663L393 678M132 601L157 600M202 610L222 610M489 668L492 652M377 488L402 484M785 150L802 144M910 144L910 156M620 612L620 595M404 319L422 316M676 406L679 415M361 331L384 330M82 751L125 762M222 610L247 608M419 619L439 615M1015 203L1036 199M452 522L456 532M593 246L577 258M871 167L855 181M362 500L384 498M992 335L995 346M855 239L862 251M925 252L928 262M384 330L409 330M266 548L253 563M762 419L742 428M439 615L458 617M255 644L275 645M819 138L819 145M477 531L483 544M50 442L73 443M366 510L385 510M784 345L785 357M90 538L95 553M346 342L365 344M336 559L320 572M810 178L794 192M638 426L622 438M275 645L297 645M1030 149L1021 151M513 654L531 654M730 261L715 272M765 444L788 443M95 561L99 578M806 348L809 360M150 760L138 755M359 559L340 571M171 359L192 357M403 569L388 580M658 426L642 438M531 654L554 652M413 676L435 678M496 267L499 280M765 444L751 454M119 564L122 575M147 775L141 768M169 575L170 587M677 357L664 369M666 450L686 453M512 246L509 256M424 569L409 581M1055 167L1056 186M345 452L324 464M933 359L953 357M537 435L540 450M502 462L482 471M735 539L729 538M255 717L277 718M474 280L459 291M666 450L669 466M287 366L290 379M686 453L706 455M191 573L192 585M1125 288L1122 283M682 295L661 307M239 374L223 381M493 582L473 592M260 466L263 477M792 369L809 370M600 377L584 391M273 634L275 645M523 460L504 471M898 119L921 118M441 471L444 485M277 718L296 715M242 597L222 610M435 291L440 303M932 216L915 228M606 463L629 463M259 583L262 599M460 545L483 544M360 379L365 391M661 307L670 320M478 618L485 628M558 591L561 605M620 365L625 380M625 380L645 380M29 498L45 493M548 641L531 654M1030 149L1024 165M676 224L678 237M782 165L805 166M459 291L461 306M402 484L422 496M459 472L464 484M545 474L565 472M381 376L388 389M910 144L931 145M160 503L143 516M230 393L215 406M670 320L647 332M321 645L324 656M401 712L405 725M645 380L668 378M315 500L321 512M498 388L517 388M1127 220L1135 234M656 486L639 498M422 316L430 330M1000 226L1003 236M687 308L670 320M409 330L413 342M689 321L674 330M337 643L343 653M508 486L526 487M250 395L238 404M27 481L45 493M517 388L542 391M150 751L135 742M346 402L367 401M861 190L883 191M554 510L537 522M693 212L715 215M445 315L449 327M639 498L640 510M526 487L548 487M492 497L509 498M460 264L477 258M102 408L86 420M797 406L782 418M980 155L962 165M367 401L391 403M119 628L141 623M197 420L177 429M678 237L663 250M576 508L560 521M715 215L738 213M761 165L766 177M583 524L565 535M915 228L939 225M430 330L413 342M750 251L730 261M509 498L533 498M158 553L161 562M491 508L513 509M1009 125L1024 135M820 407L805 418M284 731L277 718M220 416L237 416M67 433L50 442M782 165L790 179M602 524L584 534M939 225L961 226M604 534L587 547M182 553L185 562M513 509L534 508M75 571L71 553M519 522L537 522M733 521L735 539M679 415L679 430M349 353L371 353M317 328L321 343M90 432L112 432M785 430L765 444M625 535L609 547M222 670L241 669M1089 233L1114 235M628 269L632 284M886 264L867 276M253 563L257 573M337 438L321 453M537 522L560 521M928 347L912 357M809 360L792 369M542 533L565 535M551 427L558 437M332 332L346 342M474 448L455 461M155 370L177 372M522 283L511 303M477 258L474 280M119 628L138 610M644 261L651 273M662 441L666 450M249 694L271 692M572 355L573 363M611 280L594 295M950 348L933 359M320 572L324 582M565 535L584 534M565 545L587 547M494 448L478 458M914 373L935 370M651 273L632 284M175 731L192 729M592 352L596 364M496 267L517 268M572 291L574 306M158 609L141 623M421 366L406 379M435 692L435 678M388 580L390 593M587 547L609 547M277 347L266 350M491 378L498 388M632 558L653 560M413 460L417 472M1084 283L1088 294M824 217L830 228M818 202L824 217M443 363L424 375M178 609L163 622M1082 212L1063 222M594 295L598 306M409 581L409 593M474 280L499 280M1125 288L1141 269M653 560L673 560M738 592L724 587M444 641L451 651M774 382L796 383M419 630L400 640M603 450L621 451M809 225L791 237M591 473L573 485M845 214L854 226M960 105L965 120M435 291L459 291M513 375L498 388M815 311L798 324M388 389L367 401M428 663L435 678M464 640L470 653M830 228L813 238M648 391L671 394M548 487L553 495M249 694L249 703M459 291L483 292M579 319L584 329M420 303L440 303M236 647L258 657M144 397L147 407M985 119L965 120M563 228L580 222M157 600L177 600M238 404L220 416M772 250L761 272M327 680L335 690M469 495L448 508M502 402L521 401M813 238L792 252M701 515L684 526M599 320L607 330M440 303L461 306M564 331L547 343M422 316L445 315M859 397L865 409M580 222L597 216M1086 186L1100 198M86 420L90 432M247 608L264 611M472 509L474 522M521 401L546 403M638 246L644 261M832 239L816 251M353 414L375 414M437 535L424 555M584 329L567 343M716 405L718 419M264 611L286 609M110 417L112 432M712 608L694 608M805 418L805 433M495 522L500 533M375 414L397 412M221 431L243 430M915 165L900 181M71 553L95 561M430 330L449 327M313 550L292 561M365 344L349 353M328 703L327 680M694 608L676 608M478 618L503 618M822 421L826 431M855 181L861 190M679 430L684 440M521 535L524 545M243 430L268 428M93 445L113 445M779 263L783 273M332 545L317 558M416 720L416 712M389 342L413 342M624 259L644 261M494 438L474 448M688 538L707 539M212 739L194 741M700 429L704 443M321 645L337 643M146 574L130 588M808 443L830 445M416 720L401 712M845 348L850 359M783 273L763 286M401 555L384 570M628 269L651 273M392 288L412 294M386 450L389 462M200 346L214 357M477 258L496 267M808 443L792 456M522 283L527 293M141 380L144 397M830 445L849 442M706 455L731 452M218 586L198 600M721 359L707 370M332 332L323 335M573 363L556 377M307 606L290 622M466 568L448 581M249 703L273 706M611 280L632 284M542 462L525 471M284 598L286 609M330 366L335 378M731 452L751 454M706 455L711 463M724 296L704 310M531 582L515 592M317 631L321 645M566 461L545 474M134 385L126 407M543 280L527 293M482 471L485 482M940 119L965 120M961 226L941 238M736 477L719 489M997 215L1000 226M650 463L669 466M744 296L728 310M594 295L612 297M277 391L280 404M850 373L877 369M377 488L362 500M668 378L648 391M768 156L782 165M239 585L259 583M504 471L508 486M404 319L384 330M829 168L851 169M512 246L530 247M719 225L723 236M151 658L133 670M596 497L576 508M696 490L697 500M591 473L607 474M728 310L731 321M607 601L582 605M298 390L304 405M347 668L370 679M574 306L598 306M126 407L128 418M362 500L366 510M172 660L156 671M304 594L328 596M851 169L871 167M883 191L902 190M600 509L602 524M853 126L856 131M449 327L454 339M548 487L573 485M731 321L713 332M147 407L150 421M579 319L599 320M843 409L844 420M391 606L417 604M723 236L730 248M618 509L621 521M1042 155L1050 178M902 190L925 191M621 521L625 535M738 213L756 216M471 328L479 341M635 413L614 425M533 498L553 495M125 644L125 636M599 320L624 318M865 409L865 421M564 331L584 329M1021 151L1003 165M237 416L221 431M750 162L742 179M168 637L188 633M756 216L782 213M642 524L645 536M1145 222L1151 223M805 166L810 178M792 252L779 263M553 495L574 498M508 423L494 438M426 276L412 294M520 341L547 343M600 257L582 272M1168 233L1155 234M985 179L971 190M829 168L833 178M444 641L464 640M983 224L1000 226M666 535L669 548M112 432L93 445M223 551L227 563M554 510L576 508M970 345L974 359M547 343L567 343M391 353L415 354M582 272L572 291M1009 179L993 189M826 431L808 443M1135 234L1155 234M707 191L685 201M673 272L674 284M928 262L909 277M145 456L168 457M292 561L298 573M995 346L998 356M583 524L602 524M415 354L435 353M517 449L502 462M283 669L303 667M774 202L756 216M50 732L78 685M691 274L698 286M176 743L156 741M535 255L555 257M465 363L469 376M125 636L141 623M604 534L625 535M871 359L850 373M364 572L363 582M150 718L168 719M202 610L208 621M540 450L523 460M267 367L287 366M803 215L784 225M798 205L782 213M689 464L673 476M223 381L230 393M674 284L657 296M634 355L638 368M486 366L491 378M222 610L229 621M429 579L431 594M455 461L459 472M977 369L1000 369M461 627L464 640M532 307L510 316M629 476L633 485M563 270L582 272M431 594L417 604M634 296L640 307M495 252L509 256M556 377L561 390M285 678L271 692M526 487L509 498M816 382L835 384M551 303L537 316M984 165L1003 165M738 575L722 574M543 280L567 279M736 477L759 479M431 390L415 400M120 395L113 400M508 643L513 654M509 498L513 509M689 394L710 391M875 226L855 239M50 732L86 708M910 144L892 156M1036 189L1056 186M624 318L627 332M696 490L719 489M597 216L614 210M280 404L262 418M546 403L565 399M931 145L910 156M855 239L839 253M925 252L905 264M893 216L910 215M607 330L589 341M677 500L697 500M614 210L631 204M1112 210L1127 220M128 418L132 432M565 399L589 403M682 247L691 261M875 240L862 251M397 412L420 411M910 215L932 216M90 538L71 553M962 165L966 178M627 332L612 343M682 511L701 515M1127 220L1145 222M665 192L665 199M676 608L669 594M844 420L849 430M1009 125L1016 141M707 249L710 260M420 411L439 411M268 428L252 441M806 348L785 357M109 541L95 553M984 165L985 179M570 235L589 236M619 248L638 246M413 342L391 353M708 525L727 526M669 594L654 604M865 421L872 430M900 181L902 190M119 564L99 578M290 428L309 430M140 442L145 456M266 735L257 727M820 261L824 274M638 246L663 250M668 258L691 261M394 728L403 733M443 558L444 568M1013 189L1015 203M537 435L517 449M176 743L159 748M742 428L744 440M666 450L650 463M665 199L671 214M158 444L183 441M691 261L710 260M764 360L769 370M673 272L691 274M510 570L515 583M443 270L453 279M737 557L729 538M431 447L434 462M71 553L95 553M222 373L239 374M453 450L474 448M686 453L669 466M125 644L145 635M685 201L693 212M169 346L192 357M248 736L257 727M567 279L572 291M52 456L79 457M259 583L242 597M530 558L547 556M584 462L591 473M691 274L715 272M558 591L540 604M620 365L600 377M349 606L331 618M453 450L455 461M964 386L941 381M576 584L580 595M140 564L161 562M459 472L444 485M715 215L719 225M459 291L440 303M606 463L607 474M589 283L594 295M328 596L331 608M381 376L365 391M62 481L45 493M591 569L612 572M580 595L561 605M638 368L625 380M370 607L354 617M956 92L960 105M422 483L422 496M213 576L232 573M520 665L531 654M440 303L445 315M1000 226L987 238M993 119L990 130M337 643L324 656M791 299L773 311M658 582L684 585M200 684L206 696M190 718L192 729M320 391L324 403M634 296L657 296M1182 250L1161 257M281 585L302 584M214 659L222 670M445 315L430 330M881 133L905 130M1022 224L1003 236M639 498L618 509M839 395L859 397M870 120L881 133M739 492L740 500M116 612L138 610M342 389L346 402M775 322L777 337M618 305L640 307M168 409L171 418M784 225L791 237M716 174L733 168M347 595L371 595M434 399L420 411M819 145L822 156M1009 125L990 130M658 498L640 510M640 510L642 524M693 406L716 405M1003 236L987 250M192 404L197 420M758 334L738 346M624 318L648 321M782 165L766 177M1014 384L997 392M839 145L846 158M436 605L458 606M661 511L667 525M282 417L290 428M839 253L842 263M182 553L161 562M667 525L666 535M548 412L568 413M520 328L520 341M266 735L277 718M243 538L223 551M679 415L658 426M230 737L242 736M648 321L670 320M607 330L627 332M584 617L574 630M684 526L688 538M422 426L444 424M343 710L332 709M195 646L211 648M332 332L321 343M551 427L537 435M627 332L647 332M567 343L589 341M119 628L116 612M662 441L643 452M574 630L565 645M648 548L653 560M303 526L324 524M718 345L721 359M644 261L628 269M707 539L711 549M321 343L328 353M968 264L975 274M573 423L558 437M451 651L470 653M426 439L431 447M589 341L612 343M684 440L666 450M1050 178L1036 189M119 628L109 614M592 352L573 363M304 332L317 328M340 571L324 582M772 189L774 202M850 359L871 359M446 435L453 450M1035 344L1037 358M347 678L370 679M109 614L116 612M1120 269L1122 283M458 353L480 354M582 448L584 462M818 202L803 215M736 272L743 284M409 581L390 593M208 454L230 453M707 370L728 371M719 284L724 296M510 366L513 375M188 633L195 646M247 608L250 622M912 357L897 372M190 718L211 718M500 605L478 618M312 368L330 366M845 214L830 228M523 460L542 462M845 201L824 217M730 466L714 476M269 379L277 391M396 618L400 629M355 688L373 689M473 592L477 604M532 365L536 379M264 611L271 623M125 468L146 468M631 204L649 210M464 640L451 651M868 215L854 226M459 472L482 471M819 145L839 145M673 476L678 487M236 647L236 660M209 636L195 646M62 481L87 478M452 663L435 678M327 680L309 690M475 389L478 399M573 485L553 495M598 306L579 319M422 483L444 485M915 228L918 239M209 705L190 718M599 320L584 329M75 516L84 527M347 678L335 690M773 311L796 309M553 495L554 510M495 594L515 592M665 199L685 201M106 529L109 541M110 417L90 432M739 492L758 489M150 751L138 755M775 322L798 324M974 144L955 152M918 239L925 252M685 201L710 199M932 216L958 213M132 538L138 550M674 330L675 344M822 421L805 433M758 334L777 337M1054 330L1035 344M95 553L95 561M987 250L968 264M958 213L977 213M153 541L158 553M592 415L597 424M589 236L611 235M700 429L684 440M133 670L156 671M1112 210L1104 206M797 262L783 273M161 562L169 575M845 348L827 360M452 522L474 522M611 235L634 235M467 424L468 438M663 250L682 247M392 288L391 295M417 543L424 555M721 428L742 428M555 257L563 270M577 437L582 448M865 349L850 359M232 573L239 585M477 531L500 533M409 282L412 294M486 559L489 567M1056 186L1060 201M597 436L603 450M966 178L971 190M563 270L543 280M495 252L496 267M617 353L634 355M1120 259L1140 260M295 346L287 366M706 455L689 464M302 584L304 594M504 544L524 545M113 400L126 407M889 274L891 286M1105 338L1085 300M974 203L958 213M730 261L754 261M664 369L668 378M391 606L396 618M731 452L711 463M465 363L486 366M502 290L511 303M997 215L983 224M732 204L738 213M371 595L391 606M569 557L592 558M546 616L549 629M106 479L115 491M869 286L854 300M601 592L582 605M687 381L706 383M417 604L419 619M336 629L321 645M504 471L485 482M185 562L207 563M756 216L763 227M650 463L653 477M290 379L315 378M696 490L677 500M50 527L55 516M632 284L634 296M424 375L407 389M728 310L713 320M298 390L280 404M634 572L654 571M381 642L387 653M357 628L337 643M620 595L627 606M832 299L836 312M184 337L194 341M561 390L584 391M754 382L752 393M161 696L168 705M464 484L469 495M166 394L184 395M493 317L498 328M749 308L731 321M392 690L378 701M598 617L582 605M677 500L682 511M701 585L724 587M147 407L128 418M245 683L249 694M415 400L434 399M28 463L52 456M403 733L405 725M485 482L492 497M629 393L609 404M258 657L263 671M618 509L602 524M697 500L701 515M880 396L899 394M774 397L780 407M471 328L454 339M1063 222L1050 234M230 516L213 525M158 609L178 609M865 409L844 420M990 130L997 141M160 503L185 501M750 162L768 156M642 524L625 535M863 145L871 156M632 403L635 413M737 404L757 406M119 628L125 636M262 527L243 538M178 609L202 610M718 419L721 428M768 156L785 150M1161 229L1151 223M829 168L810 178M125 738L133 733M981 385L964 386M885 144L892 156M882 251L886 264M223 551L207 563M285 535L266 548M396 618L419 619M741 420L742 428M743 237L765 237M155 433L177 429M851 169L833 178M964 386L952 399M691 261L691 274M565 645L555 660M905 253L905 264M249 549L227 563M292 561L276 573M995 346L974 359M614 425L622 438M236 647L255 644M710 260L715 272M691 274L674 284M763 345L764 360M145 456L125 468M872 442L849 442M317 558L298 573M1012 347L1035 344M143 370L155 358M492 652L513 654M192 357L197 371M723 441L706 455M744 440L765 444M936 408L923 405M97 600L86 585M715 272L698 286M634 355L620 365M863 203L868 215M384 570L363 582M222 610L208 621M886 264L905 264M953 357L956 370M461 627L444 641M621 451L629 463M177 372L166 394M643 452L666 450M893 216L893 228M856 450L849 442M884 202L893 216M634 296L618 305M448 581L431 594M763 286L765 298M556 377L542 391M229 633L236 647M889 274L909 277M809 370L796 383M540 604L525 617M920 417L923 405M653 477L633 485M910 215L915 228M566 461L584 462M657 296L640 307M515 592L518 607M172 465L191 466M250 634L255 644M328 703L335 690M153 585L170 587M508 643L492 652M417 472L422 483M869 286L891 286M579 378L561 390M370 679L373 689M611 487L616 499M504 471L525 471M640 307L648 321M863 145L885 144M119 505L100 514M537 594L540 604M486 306L511 303M527 642L513 654M222 599L242 597M393 678L392 690M832 299L854 300M309 690L292 702M464 484L485 482M206 396L192 404M648 321L627 332M123 513L128 527M439 687L435 678M493 317L510 316M921 395L923 405M307 606L331 608M634 235L638 246M815 311L836 312M485 482L508 486M384 330L389 342M447 498L469 495M1016 141L1021 151M151 527L153 541M780 407L782 418M150 421L132 432M525 617L546 616M1009 125L997 141M707 249L691 261M984 165L966 178M469 495L492 497M872 442L856 450M966 238L965 251M171 526L178 540M171 418L155 433M713 332L718 345M546 616L563 618M865 421L849 430M358 641L381 642M584 534L587 547M140 442L124 454M138 550L140 564M820 261L804 274M358 300L376 305M1031 249L1015 262M472 509L491 508M197 540L201 551M454 339L479 341M443 558L424 569M888 418L872 430M754 261L743 284M742 428L723 441M381 642L400 640M177 669L198 669M1050 234L1066 233M842 263L824 274M207 563L213 576M908 348L912 357M495 522L519 522M484 670L489 668M328 353L349 353M510 570L493 582M443 270L434 281M764 431L744 440M712 608L708 597M622 438L621 451M198 669L222 670M824 467L812 456M206 696L227 696M1112 246L1133 247M248 736L234 729M605 272L611 280M227 563L232 573M276 573L281 585M785 357L769 370M521 535L542 533M460 264L453 279M453 450L434 462M576 584L558 591M642 438L643 452M227 696L249 694M606 463L591 473M52 456L35 469M589 283L572 291M773 457L772 465M298 573L302 584M450 683L435 678M345 582L347 595M259 349L266 350M596 581L580 595M371 464L373 472M897 372L914 373M436 605L439 615M153 733L175 731M545 474L548 487M510 366L532 365M549 292L551 303M1041 211L1022 224M363 582L371 595M972 94L960 105M469 376L475 389M773 311L775 322M914 286L893 301M310 478L333 485M377 629L358 641M458 606L458 617M546 234L553 243M214 659L198 669M728 371L731 383M731 383L754 382M893 167L915 165M1060 212L1047 223M739 492L723 501M653 477L673 476M342 389L324 403M426 639L425 654M775 322L758 334M502 667L513 654M1183 263L1161 257M602 391L629 393M565 472L548 487M784 225L765 237M936 108L940 119M206 696L209 705M947 189L971 190M887 114L881 133M758 489L740 500M537 316L538 328M921 118L926 132M796 309L775 322M1109 222L1114 235M611 487L633 485M365 391L346 402M410 663L413 676M696 574L722 574M192 404L171 418M923 180L945 180M458 400L478 399M839 145L822 156M282 417L268 428M765 237L750 251M661 511L642 524M565 645L554 652M556 315L564 331M596 497L616 499M278 514L262 527M215 406L197 420M863 203L884 202M905 407L888 418M478 399L502 402M791 237L772 250M305 418L329 413M684 526L666 535M871 167L877 178M538 328L520 341M600 509L618 509M762 419L764 431M329 413L353 414M1182 256L1182 250M893 167L900 181M1047 223L1063 222M707 539L689 550M248 736L255 717M1071 176L1078 180M631 204L630 221M328 703L332 709M321 343L307 354M968 264L955 276M618 509L640 510M621 521L642 524M730 608L712 608M782 418L785 430M676 608L685 599M638 426L642 438M202 431L221 431M50 442L52 456M729 538L711 549M320 708L313 704M553 243L574 245M946 251L946 265M772 189L751 201M288 548L272 561M346 342L328 353M730 261L736 272M359 559L364 572M642 524L667 525M1035 344L1017 356M314 713L296 715M645 536L666 535M658 426L662 441M141 380L155 370M73 443L93 445M765 444L773 457M754 261L761 272M249 361L267 367M600 257L624 259M736 272L719 284M677 357L686 369M424 569L429 579M666 535L688 538M669 548L689 550M169 346L184 337M282 356L287 366M50 527L61 529M788 443L808 443M761 272L743 284M155 358L155 370M605 272L628 269M532 365L513 375M264 611L250 622M239 374L247 381M493 582L495 594M689 550L711 549M724 587L708 597M523 460L525 471M981 385L1002 381M460 264L469 270M932 216L939 225M931 204L932 216M552 366L536 379M589 283L611 280M648 198L649 210M122 575L146 574M528 629L508 643M691 477L678 487M958 213L961 226M701 299L687 308M549 292L572 291M160 503L166 516M625 380L602 391M295 633L297 645M919 311L905 324M192 585L218 586M134 661L133 670M914 286L935 288M939 225L918 239M413 676L415 689M599 320L589 341M629 463L650 463M656 486L658 498M687 308L689 321M689 321L695 330M532 307L551 303M250 395L260 406M218 586L239 585M648 198L665 192M150 751L156 741M262 599L284 598M609 404L632 403M678 487L677 500M918 239L905 253M355 688L356 704M565 472L591 473M551 303L574 306M674 330L654 343M537 316L556 315M102 408L110 417M284 598L304 594M349 606L370 607M197 420L202 431M1105 338L1054 330M678 237L682 247M576 508L583 524M941 238L925 252M464 410L482 412M430 330L432 343M153 541L138 550M556 315L579 319M820 407L822 421M520 328L538 328M370 607L391 606M67 433L73 443M602 524L604 534M332 426L358 427M1024 165L1009 179M124 662L123 668M1073 248L1077 260M538 328L564 331M417 543L401 555M620 612L607 601M145 635L168 637M785 430L788 443M625 535L629 545M358 427L376 426M612 572L601 592M205 441L227 442M886 264L889 274M928 347L933 359M441 544L424 555M499 341L520 341M486 559L466 568M597 436L582 448M90 432L73 443M966 178L947 189M147 775L129 775M426 639L444 641M1078 180L1060 201M805 433L808 443M205 441L188 455M227 442L252 441M201 551L207 563M100 457L124 454M889 274L869 286M950 348L953 357M508 556L489 567M371 353L391 353M494 448L502 462M241 669L263 671M732 204L715 215M651 273L653 285M100 457L105 468M124 454L145 456M272 561L276 573M106 479L89 490M909 277L891 286M827 360L809 370M572 567L553 579M417 604L396 618M177 372L197 371M163 622L145 635M751 201L738 213M257 573L276 573M82 751L50 732M650 463L629 476M271 692L290 693M632 284L612 297M735 539L727 526M443 363L448 375M35 469L57 467M178 609L182 624M1182 250L1183 263M1082 212L1087 224M832 299L815 311M637 581L620 595M182 624L168 637M1030 377L1021 370M935 370L956 370M419 630L426 639M669 466L653 477M324 582L345 582M926 132L945 132M591 473L593 486M39 512L55 516M653 285L634 296M754 468L772 465M854 300L836 312M513 375L517 388M200 346L194 341M815 311L819 323M388 389L391 403M956 370L977 369M769 370L774 382M441 628L444 641M485 482L469 495M830 228L832 239M258 657L241 669M607 474L611 487M898 119L881 133M697 500L682 511M612 297L618 305M89 490L73 502M937 166L962 165M62 426L67 433M691 477L714 476M536 379L542 391M836 312L838 323M103 402L113 400M32 445L52 456M796 383L816 382M238 404L237 416M469 495L472 509M282 657L263 671M993 189L1013 189M701 515L708 525M73 502L75 516M714 476L736 477M656 486L678 487M435 692L415 689M407 389L391 403M488 640L492 652M838 323L822 336M671 394L689 394M885 144L871 156M500 605L518 607M1013 189L1036 189M832 239L839 253M845 214L868 215M584 329L589 341M678 487L696 490M639 498L658 498M260 406L237 416M674 330L695 330M353 414L332 426M884 202L875 226M725 513L708 525M273 634L295 633M905 253L886 264M1105 338L1070 318M915 165L923 180M314 713L320 708M658 498L677 500M313 550L317 558M365 344L371 353M640 510L661 511M648 198L665 199M633 345L654 343M710 260L691 274M221 431L205 441M937 166L945 180M1087 224L1109 222M300 723L290 730M332 545L336 559M661 511L682 511M416 720L416 733M192 357L177 372M667 525L684 526M654 343L675 344M505 352L524 354M691 274L682 295M93 445L100 457M134 661L151 658M369 664L389 664M816 192L798 205M783 273L787 286M410 733L403 733M389 342L371 353M401 555L403 569M684 526L708 525M125 762L135 742M1033 262L1013 273M953 357L935 370M524 354L548 353M352 368L378 367M808 443L812 456M389 664L410 663M884 202L868 215M392 690L415 689M644 261L668 258M804 274L807 288M721 359L728 371M763 286L744 296M838 193L818 202M466 568L473 579M63 558L66 540M707 539L729 538M1183 263L1150 278M974 359L956 370M266 350L267 367M643 452L629 463M378 367L399 364M920 417L905 407M910 215L893 228M909 204L893 216M840 459L849 442M787 286L765 298M651 273L673 272M741 357L745 369M1100 198L1082 212M489 567L493 582M250 634L236 647M921 102L936 108M531 582L537 594M95 561L119 564M328 703L309 690M566 461L565 472M205 381L223 381M543 280L549 292M138 755L141 768M736 477L739 492M537 594L518 607M596 364L579 378M331 608L311 621M744 296L749 308M632 284L653 285M553 579L558 591M938 96L960 105M668 378L671 394M393 678L373 689M169 575L191 573M151 658L156 671M917 382L941 381M653 285L674 284M39 512L52 504M963 312L945 323M542 391L521 401M172 660L177 669M983 224L966 238M798 393L816 396M143 516L128 527M1016 141L1002 153M612 297L634 296M731 321L739 332M682 186L699 180M391 403L375 414M616 499L600 509M816 396L839 395M652 401L676 406M166 516L151 527M966 238L946 251M171 526L153 541M997 215L1023 212M751 324L758 334M598 306L618 305M713 332L699 346M75 516L100 514M699 180L716 174M328 596L347 595M415 400L397 412M237 416L243 430M676 406L693 406M792 252L797 262M503 414L528 413M82 775L100 775M196 525L178 540M197 540L182 553M658 235L678 237M739 332L718 345M106 529L128 527M1030 377L1014 384M262 418L268 428M112 432L113 445M816 251L820 261M528 413L548 412M376 426L397 426M217 537L201 551M730 248L750 251M884 408L888 418M520 341L505 352M132 538L153 541M598 617L584 617M1009 179L1013 189M132 432L140 442M826 431L830 445M654 604L658 582M397 426L422 426M227 563L213 576M597 216L605 224M707 191L710 199M252 441L270 443M928 262L929 273M750 251L772 250M1182 256L1161 257M483 544L466 557M694 608L708 597M779 263L797 262M642 438L621 451M153 541L178 540M808 476L812 456M158 553L182 553M124 662L125 644M849 430L849 442M773 457L754 468M298 573L281 585M614 210L630 221M270 443L295 438M728 190L732 204M252 441L230 453M929 273L914 286M797 262L820 261M871 359L877 369M547 556L528 567M783 273L804 274M249 361L261 359M182 553L201 551M197 371L183 385M540 450L542 462M295 346L304 332M798 205L803 215M689 464L691 477M222 373L197 371M363 582L347 595M168 457L188 455M674 284L682 295M955 276L935 288M893 361L897 372M804 274L824 274M728 371L706 383M612 572L596 581M458 606L439 615M253 563L272 561M1014 384L1002 381M208 621L188 633M78 685L123 668M698 286L701 299M431 594L436 605M176 477L157 491M745 369L731 383M477 604L458 617M787 286L807 288M563 228L553 243M398 304L382 317M936 108L921 118M320 572L340 571M526 487L533 498M711 463L691 477M551 303L556 315M970 132L990 130M921 118L905 130M1109 222L1089 233M135 491L142 502M893 301L876 312M921 102L921 118M744 296L765 298M431 390L434 399M816 382L798 393M227 696L209 705M485 628L488 640M388 580L409 581M875 226L875 240M556 315L538 328M168 705L150 718M940 119L926 132M876 312L879 324M765 298L791 299M452 389L458 400M728 310L749 308M280 404L282 417M555 660L554 652M324 656L303 667M456 594L473 592M1003 165L1024 165M55 516L61 529M931 145L933 154M61 529L66 540M1114 235L1094 246M607 330L612 343M879 324L866 337M749 308L773 311M866 337L845 348M304 405L305 418M731 321L751 324M1086 186L1082 200M893 167L877 178M936 408L920 417M540 604L561 605M875 240L882 251M84 527L90 538M950 141L955 152M653 413L679 415M719 489L739 492M627 332L633 345M782 418L764 431M751 324L775 322M665 192L685 201M713 332L739 332M397 412L376 426M1086 186L1078 180M520 665L502 667M317 631L336 629M946 251L928 262M109 541L116 551M268 428L270 443M531 425L551 427M1112 210L1109 222M669 594L685 599M413 342L415 354M739 332L758 334M675 344L699 346M754 261L736 272M965 251L946 265M75 571L63 558M151 658L172 660M300 723L296 715M402 439L426 439M432 343L435 353M375 545L381 559M282 356L267 367M699 346L718 345M548 353L572 355M1077 260L1060 270M299 451L321 453M1081 271L1060 283M307 354L287 366M1085 300L1063 295M143 696L161 696M572 355L592 352M686 453L689 464M399 364L421 366M428 663L452 663M125 468L106 479M931 204L910 215M97 600L113 601M352 368L342 389M848 274L850 288M321 453L345 452M349 606L354 617M25 493L45 493M1017 356L1000 369M888 434L888 418M421 366L443 363M958 213L939 225M354 617L336 629M952 201L932 216M62 481L69 491M168 705L186 705M829 289L808 299M580 595L582 605M638 368L645 380M370 607L377 616M295 633L275 645M238 466L260 466M155 358L161 352M198 600L202 610M977 213L961 226M247 381L269 379M744 509L733 515M931 145L950 141M791 299L796 309M176 477L195 478M706 383L710 391M435 678L415 689M678 487L658 498M177 669L160 681M704 310L689 321M950 141L974 144M1022 224L1025 237M313 704L296 715M833 178L855 181M169 346L161 352M135 491L157 491M143 696L146 709M584 391L565 399M434 399L439 411M373 689L356 704M658 498L661 511M1047 223L1050 234M855 181L877 178M189 515L171 526M1003 236L1006 249M774 202L798 205M758 334L763 345M314 713L313 704M1030 320L1013 333M119 505L142 502M859 397L880 396M1025 237L1031 249M798 205L818 202M213 525L197 540M1073 248L1056 259M1041 211L1060 212M243 538L249 549M798 324L799 337M123 513L143 516M733 168L750 162M866 337L883 334M716 405L737 404M548 412L531 425M236 525L217 537M1094 246L1077 260M1060 212L1082 212M461 627L485 628M703 239L723 236M777 337L763 345M194 741L192 729M151 527L171 526M997 392L981 385M305 418L309 430M805 433L788 443M862 251L866 263M828 346L845 348M201 551L185 562M568 413L592 415M63 558L71 553M422 426L402 439M264 539L249 549M723 236L743 237M573 423L577 437M772 250L792 252M524 545L530 558M567 343L548 353M684 440L686 453M177 429L183 441M1050 178L1056 186M100 457L79 466M702 356L721 359M272 561L257 573M340 571L345 582M565 645L548 641M584 534L604 534M792 252L816 251M820 261L842 263M592 558L591 569M197 540L217 537M704 443L723 441M124 454L105 468M812 456L796 469M609 547L629 545M997 273L996 286M842 263L866 263M912 357L914 373M704 443L686 453M654 571L658 582M223 551L249 549M500 605L503 618M845 201L845 214M573 363L596 364M35 469L42 478M730 466L736 477M977 284L957 299M848 274L867 276M933 359L935 370M769 370L754 382M441 628L426 639M603 450L606 463M292 561L317 558M271 623L273 634M607 474L593 486M612 297L598 306M868 215L875 226M754 468L759 479M406 379L424 375M743 284L744 296M220 476L202 490M536 379L517 388M239 374L230 393M209 636L211 648M105 589L130 588M836 312L819 323M938 301L942 309M792 369L774 382M518 607L503 618M134 385L144 397M829 289L850 288M364 572L384 570M528 629L548 641M856 385L859 397M598 306L599 320M573 485L574 498M73 502L55 516M277 391L298 390M209 705L211 718M856 311L838 323M178 493L185 501M488 640L470 653M637 609L627 606M177 600L198 600M791 299L808 299M347 678L355 688M271 692L249 703M429 579L448 581M365 653L369 664M93 503L75 516M731 392L716 405M423 705L415 689M126 407L147 407M341 510L324 524M498 388L502 402M923 323L928 337M836 132L853 126M589 403L568 413M100 514L106 529M974 144L980 155M843 409L865 409M367 524L351 532M796 309L815 311M346 402L353 414M906 334L887 346M853 126L870 120M937 166L923 180M904 425L888 434M997 141L1002 153M128 527L132 538M987 250L991 260M695 417L718 419M392 531L375 545M798 324L819 323M93 445L79 457M888 434L872 442M797 262L804 274M484 670L467 676M1006 249L1015 262M352 546L336 559M410 733L416 733M323 335L321 343M337 643L358 641M925 252L946 251M304 332L307 354M777 337L799 337M113 445L100 457M467 676L450 683M865 349L871 359M804 274L787 286M424 555L403 569M479 341L480 354M721 428L704 443M349 353L352 368M156 671L177 669M968 264L991 260M214 357L192 357M840 459L830 445M830 445L812 456M563 270L567 279M50 527L39 512M741 357L728 371M974 203L977 213M489 567L473 579M468 438L494 438M1105 338L1150 278M998 356L1017 356M925 191L931 204M183 694L206 696M669 594L658 582M731 452L730 466M751 454L773 457M993 201L997 215M172 465L152 478M938 96L936 108M1174 241L1161 257M553 579L537 594M869 286L876 300M363 451L386 450M980 111L965 120M336 629L337 643M997 273L1013 273M914 373L896 382M751 454L754 468M669 466L689 464M765 298L749 308M424 375L431 390M687 381L671 394M357 628L358 641M686 369L687 381M280 463L301 462M977 284L996 286M754 382L774 397M1023 212L1000 226M150 751L153 733M222 670L225 680M607 474L629 476M392 690L398 700M974 144L997 141M231 502L212 512M749 308L751 324M46 435L50 442M333 485L337 500M529 240L530 247M195 659L177 669M220 476L239 478M97 600L105 589M938 301L957 299M629 393L632 403M719 489L697 500M576 584L596 581M1063 222L1066 233M252 502L230 516M751 324L739 332M573 485L593 486M230 516L236 525M877 178L900 181M178 493L202 490M183 694L186 705M417 604L436 605M648 391L652 401M919 311L942 309M1087 224L1089 233M900 181L923 180M256 512L262 527M818 202L845 201M262 527L264 539M262 418L243 430M188 633L209 636M1055 167L1050 178M1161 229L1168 233M502 402L503 414M82 751L100 775M923 323L945 323M723 501L725 513M816 251L797 262M1066 233L1073 248M845 201L863 203M280 524L285 535M884 408L865 421M285 535L288 548M822 336L828 346M132 432L113 445M851 169L855 181M464 640L488 640M906 334L928 337M249 549L253 563M576 508L600 509M1133 247L1120 259M605 224L630 221M306 537L313 550M694 608L685 599M155 433L140 442M1174 241L1168 233M849 430L830 445M467 676L452 663M614 210L605 224M728 190L710 199M946 265L929 273M145 456L146 468M317 558L320 572M602 524L621 521M46 435L62 426M765 237L791 237M435 353L458 353M565 545L569 557M872 430L849 442M723 441L731 452M303 667L323 669M750 190L732 204M887 346L908 348M555 257L577 258M715 272L719 284M1012 347L998 356M384 570L388 580M625 535L645 536M893 361L877 369M259 349L261 359M287 366L312 368M684 585L685 599M632 558L634 572M744 440L751 454M335 690L355 688M168 457L146 468M698 286L682 295M764 360L785 357M324 464L310 478M648 548L669 548M448 581L456 594M1037 273L1041 285M358 327L361 331M343 710L335 690M1000 369L1021 370M809 370L816 382M540 604L546 616M653 477L656 486M79 466L87 478M620 365L638 368M657 296L661 307M135 491L119 505M473 579L473 592M125 714L125 738M579 378L584 391M701 585L685 599M1019 287L999 299M831 373L835 384M561 605L563 618M835 384L856 385M485 628L464 640M183 385L184 395M311 621L317 631M109 614L113 601M448 375L469 376M157 491L142 502M119 505L123 513M175 731L156 741M876 312L861 325M892 156L910 156M39 512L45 493M452 389L434 399M981 299L983 308M505 630L488 640M134 385L141 380M373 472L397 474M393 678L415 689M710 391L731 392M527 642L531 654M896 382L899 394M309 690L313 704M151 649L151 658M142 502L143 516M320 391L342 389M206 396L215 406M899 309L879 324M648 321L647 332M1029 178L1050 178M304 405L282 417M538 664L554 652M333 485L354 485M78 685L86 708M335 690L356 704M760 501L740 500M84 527L66 540M407 653L410 663M633 485L639 498M950 141L933 154M168 409L192 404M697 500L723 501M385 510L367 524M324 403L305 418M974 203L993 201M1100 198L1082 200M150 421L155 433M242 597L262 599M901 237L882 251M870 120L887 114M597 216L589 236M804 153L782 165M966 238L987 250M647 332L633 345M701 515L725 513M414 522L392 531M331 608L349 606M171 418L177 429M682 186L685 201M740 226L763 227M439 411L464 410M887 114L904 108M1127 220L1109 222M1031 249L1033 262M375 545L359 559M432 343L415 354M766 177L750 190M437 535L417 543M803 215L791 237M309 430L332 426M1003 165L985 179M856 450L840 459M842 263L848 274M1052 247L1056 259M399 544L381 559M454 339L435 353M764 431L765 444M712 608L725 596M158 444L145 456M183 441L205 441M866 263L867 276M435 692L423 705M848 274L829 289M710 260L730 261M299 451L280 463M785 357L792 369M466 557L444 568M584 617L594 622M95 553L116 551M987 250L1006 249M239 374L249 361M391 353L399 364M125 468L115 491M52 456L57 467M79 457L100 457M867 276L850 288M715 272L736 272M1104 206L1087 224M528 567L515 583M971 190L974 203M596 581L601 592M161 562L185 562M1033 262L1056 259M198 600L178 609M87 478L69 491M792 456L812 456M1041 211L1047 223M1036 199L1041 211M698 286L719 284M914 286L919 300M706 383L689 394M232 573L257 573M629 463L607 474M1037 273L1060 270M377 629L381 642M222 599L202 610M208 621L229 633M45 493L52 504M1060 212L1063 222M711 463L730 466M808 299L796 309M620 583L601 592M657 296L682 295M1026 307L1010 321M400 629L400 640M731 383L710 391M302 584L324 582M565 472L573 485M1019 287L1041 285M1047 223L1025 237M69 491L73 502M796 309L798 324M274 500L256 512M365 391L367 401M475 389L498 388M640 307L661 307M1104 206L1082 212M236 660L222 670M125 690L140 682M371 595L390 593M227 696L249 703M981 299L999 299M1025 237L1006 249M426 276L443 270M798 324L777 337M278 514L280 524M215 406L220 416M534 508L519 522M390 593L409 593M458 606L477 604M791 237L792 252M963 312L983 308M538 328L547 343M633 485L656 486M819 323L799 337M760 501L758 489M301 513L303 526M1114 235L1133 247M560 521L542 533M866 337L887 346M305 418L290 428M477 604L500 605M229 633L250 634M862 251L842 263M1182 256L1183 263M546 403L548 412M444 424L467 424M328 703L320 708M760 501L744 509M616 499L639 498M324 524L331 537M647 332L674 330M524 545L508 556M329 413L309 430M250 634L273 634M177 429L158 444M1030 377L1105 338M508 643L527 642M980 111L985 119M314 439L337 438M288 548L292 561M346 342L349 353M435 692L439 687M176 743L175 731M542 545L530 558M351 532L352 546M612 343L633 345M592 558L572 567M792 484L796 469M202 431L183 441M527 642L548 641M323 669L347 668M314 439L299 451M423 705L416 712M991 260L975 274M171 359L155 370M997 273L977 284M612 558L591 569M480 354L505 352M654 571L637 581M277 347L282 356M73 443L79 457M1085 300L1084 283M347 668L369 664M332 332L349 326M794 192L774 202M761 272L763 286M208 454L212 468M230 453L256 452M381 559L384 570M85 404L103 402M933 359L914 373M680 571L658 582M295 346L307 354M330 366L352 368M724 587L725 596M603 450L584 462M271 623L250 634M788 443L792 456M57 467L42 478M373 689L392 690M754 468L736 477M743 284L724 296M552 366L556 377M444 568L448 581M146 468L172 465M938 301L919 311M113 601L116 612M856 385L839 395M528 629L527 642M772 465L759 479M839 145L863 145M691 477L696 490M701 299L704 310M178 493L160 503M87 478L106 479M515 583L515 592M957 299L942 309M625 380L629 393M919 311L923 323M877 369L877 385M877 385L896 382M549 629L548 641M939 225L941 238M365 653L347 668M714 476L719 489M229 708L211 718M742 179L766 177M202 490L185 501M620 612L627 606M45 493L69 491M942 309L945 323M645 380L648 391M422 496L409 511M498 388L478 399M923 323L906 334M933 154L955 152M387 653L369 664M752 393L774 397M611 235L600 257M100 514L84 527M398 304L420 303M75 571L99 578M185 501L189 515M69 491L89 490M517 388L502 402M707 191L728 190M432 511L431 521M346 402L329 413M945 323L928 337M774 397L798 393M997 141L980 155M941 238L946 251M128 527L109 541M713 320L713 332M52 504L73 502M367 401L353 414M632 403L652 401M1001 119L990 130M464 410L444 424M1006 249L991 260M977 213L997 215M1024 165L1029 178M846 158L829 168M695 330L675 344M55 516L75 516M619 248L600 257M61 529L84 527M220 416L221 431M733 168L742 179M738 346L763 345M482 412L503 414M332 426L314 439M178 540L158 553M214 659L236 660M634 235L658 235M441 544L443 558M84 527L106 529M479 341L458 353M90 538L109 541M349 353L330 366M90 432L93 445M1078 180L1082 200M205 441L208 454M974 144L962 165M707 249L730 248M925 191L909 204M499 341L480 354M1140 260L1120 269M508 556L510 570M109 541L132 538M332 332L328 353M155 370L157 384M116 551L138 550M905 264L909 277M993 201L977 213M947 189L931 204M909 277L914 286M209 705L229 708M129 775L100 775M530 558L528 567M827 360L831 373M572 567L576 584M138 550L158 553M936 408L944 396M163 622L168 637M751 454L730 466M486 366L510 366M751 201L756 216M229 708L249 703M891 286L876 300M850 359L850 373M761 272L783 273M686 369L668 378M591 569L596 581M177 372L157 384M637 581L642 593M207 563L227 563M182 624L188 633M1077 260L1095 260M669 466L673 476M315 378L335 378M653 285L657 296M222 670L200 684M131 481L115 491M707 370L687 381M86 708L125 690M743 284L763 286M333 485L315 500M394 728L405 725M854 300L856 311M276 573L298 573M262 599L247 608M774 382L774 397M85 404L86 420M184 395L206 396M415 689L398 700M898 119L905 130M89 490L93 503M378 701L379 712M701 299L724 296M86 585L105 589M28 463L35 469M298 573L320 572M1069 308L1050 319M183 694L168 705M345 582L363 582M648 391L632 403M282 657L283 669M1087 224L1066 233M737 557L722 574M899 394L921 395M398 700L401 712M115 491L119 505M256 512L236 525M856 131L839 145M337 500L341 510M407 389L415 400M1145 222L1155 234M687 308L704 310M838 323L844 336M363 582L388 580M299 658L303 667M409 593L431 594M502 402L482 412M82 751L86 708M723 501L701 515M921 395L944 396M757 406L780 407M1066 233L1052 247M54 532L66 540M280 524L264 539M861 325L866 337M704 310L728 310M822 336L806 348M260 406L262 418M521 401L503 414M431 594L456 594M353 414L358 427M725 513L727 526M780 407L797 406M1089 233L1073 248M611 416L635 413M306 537L288 548M844 336L828 346M713 320L731 321M952 399L936 408M375 414L376 426M518 607L540 604M125 714L143 696M221 431L227 442M66 540L71 553M635 413L653 413M1085 300L1070 318M489 422L508 423M331 537L313 550M839 253L862 251M695 330L713 332M565 545L547 556M633 345L617 353M450 683L452 663M243 538L264 539M538 664L520 665M295 633L317 631M243 430L252 441M1054 330L1037 358M508 423L531 425M816 192L818 202M359 440L384 438M389 342L391 353M1033 262L1037 273M587 547L569 557M632 558L612 572M744 440L731 452M266 548L288 548M86 585L75 571M359 440L345 452M384 438L402 439M838 193L845 201M1056 259L1060 270M256 452L278 451M1037 273L1019 287M974 359L977 369M653 560L634 572M643 452L650 463M336 559L359 559M79 466L62 481M909 204L910 215M964 386L956 370M473 579L456 594M787 286L791 299M278 451L299 451M1060 270L1041 285M120 395L134 385M256 452L260 466M909 277L929 273M831 373L816 382M722 574L701 585M561 605L546 616M183 385L166 394M311 621L295 633M105 468L87 478M403 569L424 569M716 174L728 190M796 469L779 477M824 274L829 289M359 559L381 559M807 288L808 299M893 228L882 251M286 475L269 488M113 400L110 417M331 608L331 618M596 364L600 377M191 466L212 468M998 356L977 369M981 299L963 312M582 605L563 618M891 286L914 286M157 600L158 609M205 381L184 395M331 618L317 631M424 569L444 568M896 382L880 396M151 649L134 661M42 478L45 493M885 144L910 144M142 502L123 513M133 670L140 682M248 491L252 502M131 481L152 478M143 370L141 380M999 299L983 308M963 312L964 323M538 664L531 654M854 300L876 300M542 391L546 403M917 382L899 394M171 646L151 658M633 485L616 499M493 582L515 583M407 653L389 664M759 479L758 489M273 706L255 717M983 224L987 238M143 516L151 527M1078 180L1056 186M790 179L810 178M152 478L176 477M89 490L115 491M983 308L987 321M561 390L565 399M836 312L856 311M391 403L397 412M744 509L740 500M156 671L140 682M425 654L410 663M616 499L618 509M558 591L580 595M810 178L833 178M166 516L171 526M732 204L751 201M115 491L135 491M73 502L93 503M328 703L313 704M987 321L967 334M856 311L876 312M551 662L554 652M415 400L420 411M838 323L861 325M163 622L182 624M987 238L987 250M196 525L197 540M751 201L774 202M892 156L893 167M739 332L738 346M699 180L685 201M93 503L119 505M861 325L879 324M822 336L844 336M503 414L489 422M419 630L441 628M1023 212L1041 211M1052 247L1033 262M217 537L223 551M248 736L242 736M100 514L123 513M520 341L524 354M844 336L866 337M711 549L697 559M784 345L806 348M866 263L848 274M375 294L376 305M484 670L472 664M441 628L461 627M376 426L359 440M258 657L282 657M416 712L415 689M678 237L703 239M1085 300L1069 308M512 435L537 435M483 544L486 559M128 527L151 527M547 343L548 353M391 353L378 367M806 348L828 346M660 354L677 357M282 657L299 658M956 92L950 92M252 441L256 452M160 681L182 683M971 190L952 201M929 273L935 288M407 449L431 447M547 556L549 570M785 150L804 153M415 354L399 364M197 371L205 381M79 457L57 467M677 357L702 356M1036 199L1023 212M182 683L200 684M993 189L974 203M955 276L954 285M238 466L220 476M324 464L346 462M612 572L620 583M155 358L171 359M239 585L222 599M792 456L772 465M532 365L552 366M208 621L209 636M458 617L441 628M1060 201L1041 211M176 477L178 493M273 706L292 702M935 288L919 300M671 214L655 222M745 369L754 382M634 572L637 581M400 629L381 642M477 604L478 618M398 304L404 319M229 621L229 633M704 310L695 330M304 594L307 606M69 491L52 504M360 379L381 376M711 463L714 476M297 645L282 657M195 478L202 490M804 153L822 156M824 274L848 274M893 301L899 309M286 475L310 478M1174 241L1155 244M816 382L816 396M227 696L229 708M381 376L406 379M855 181L845 201M52 504L55 516M230 393L250 395M283 669L266 682M168 705L168 719M940 119L945 132M160 681L143 696M945 180L966 178M919 300L919 311M740 226L743 237M248 491L269 488M689 394L676 406M324 656L323 669M250 395L277 391M186 705L190 718M965 120L970 132M168 719L153 733M301 513L280 524M1114 235L1112 246M884 202L909 204M905 130L885 144M384 498L385 510M879 324L883 334M866 337L865 349M231 502L252 502M710 391L693 406M802 144L819 138M546 403L528 413M78 685L125 690M797 406L820 407M321 512L303 526M909 204L931 204M324 524L306 537M655 222L676 224M905 324L906 334M230 516L256 512M819 138L836 132M565 399L548 412M397 412L397 426M820 407L843 409M653 413L638 426M348 524L331 537M676 224L696 224M813 238L832 239M150 421L140 442M256 512L278 514M262 527L280 524M920 417L904 425M420 411L422 426M965 251L968 264M993 119L985 119M679 415L695 417M531 425L512 435M372 533L352 546M832 239L855 239M792 484L779 477M882 251L905 253M629 545L632 558M675 344L660 354M73 443L52 456M280 524L303 526M285 535L306 537M290 428L295 438M208 454L191 466M809 360L827 360M381 559L364 572M551 427L573 423M375 294L391 295M402 439L407 449M1077 260L1081 271M905 253L925 252M306 681L327 680M1081 271L1084 283M307 354L312 368M295 346L282 356M230 737L218 732M1085 300L1088 294M306 537L331 537M788 443L773 457M904 425L888 418M313 550L332 545M63 558L52 544M230 453L212 468M697 559L696 574M125 468L131 481M664 369L686 369M444 568L429 579M426 439L446 435M883 191L884 202M1095 260L1101 270M328 353L330 366M946 265L968 264M1017 356L1021 370M130 588L132 601M332 545L352 546M354 617L357 628M146 468L152 478M952 201L958 213M491 378L513 375M515 583L495 594M829 289L832 299M1101 270L1084 283M146 574L169 575M132 601L116 612M955 276L975 274M877 369L856 385M401 555L424 555M377 616L377 629M714 476L696 490M977 213L983 224M168 637L151 649M850 288L854 300M942 309L923 323M645 380L629 393M416 720L405 725M1043 296L1045 309M935 288L954 285M247 381L230 393M466 568L489 567M211 648L214 659M177 669L182 683M704 310L713 320M185 501L166 516M388 389L407 389M289 488L297 498M432 511L414 522M954 285L977 284M731 383L752 393M893 301L919 300M584 391L589 403M198 669L200 684M358 300L375 294M531 582L553 579M470 653L472 664M204 504L189 515M713 320L695 330M373 689L378 701M189 515L196 525M839 395L820 407M238 404L260 406M919 300L938 301M602 391L609 404M1030 320L1034 333M876 312L899 309M530 247L517 268M693 406L679 415M601 592L620 595M212 512L213 525M921 102L938 96M213 525L217 537M86 420L110 417M570 235L553 243M27 481L35 469M474 522L456 532M220 416L202 431M899 309L919 311M458 400L464 410M879 324L905 324M1013 333L995 346M607 601L601 592M824 467L808 476M208 621L229 621M548 412L551 427M236 525L243 538M1094 246L1095 260M805 418L822 421M933 154L937 166M777 337L784 345M836 132L819 145M500 533L483 544M905 324L923 323M808 476L792 484M1050 234L1052 247M416 720L410 733M422 426L426 439M264 539L266 548M822 421L844 420M679 430L700 429M509 256L517 268M567 343L572 355M883 334L906 334M828 346L809 360M227 442L208 454M905 264L889 274M1112 246L1095 260M28 463L32 445M530 558L510 570M700 429L721 428M936 408L921 395M558 437L577 437M589 341L592 352M517 268L499 280M263 671L283 669M845 348L865 349M124 454L125 468M32 445L46 435M1071 176L1056 186M324 656L343 653M850 359L831 373M1082 200L1082 212M591 569L576 584M1036 189L1036 199M577 437L597 436M458 353L443 363M704 443L706 455M141 380L157 384M290 693L309 690M1081 271L1101 270M721 359L741 357M57 467L79 466M1183 263L1105 338M225 680L245 683M280 463L263 477M658 582L642 593M474 448L494 448M977 284L981 299M218 732L234 729M281 585L262 599M772 465L796 469M503 618L485 628M220 476L222 491M1042 155L1024 165M389 462L413 460M792 369L796 383M518 607L525 617M347 595L349 606M115 491L93 503M398 700L379 712M239 478L248 491M856 311L861 325M846 158L871 156M337 500L321 512M1145 222L1135 234M444 485L447 498M331 473L353 476M299 658L283 669M733 515L740 500M271 692L273 706M731 392L737 404M1043 296L1063 295M93 503L100 514M323 669L306 681M153 733L135 742M684 585L701 585M871 156L892 156M1161 229L1155 234M861 325L844 336M211 718L218 732M985 179L1009 179M733 521L725 513M341 510L348 524M945 132L950 141M289 488L310 487M471 316L449 327M290 693L292 702M1026 307L1045 309M589 403L592 415M563 228L570 235M138 610L158 609M1009 179L1029 178M1155 234L1155 244M931 204L952 201M367 524L372 533M906 334L908 348M375 414L358 427M274 500L297 498M52 544L54 532M609 404L611 416M1030 320L1050 319M580 222L589 236M366 510L348 524M354 617L377 616M530 247L509 256M393 521L392 531M952 201L974 203M696 224L719 225M392 531L399 544M928 337L928 347M278 514L301 513M243 430L227 442M946 265L935 288M1050 319L1070 318M1013 333L1034 333M695 417L679 430M352 546L359 559M719 225L740 226M416 532L417 543M855 239L875 240M113 445L124 454M1034 333L1054 330M970 345L995 346M742 179L728 190M1056 259L1037 273M424 555L424 569M721 428L723 441M669 548L673 560M738 346L741 357M324 524L348 524M861 190L845 201M995 346L1012 347M256 452L238 466M765 237L772 250M502 667L489 668M358 327L346 342M946 251L965 251M99 578L105 589M617 353L596 364M351 532L372 533M669 594L684 585M716 174L707 191M824 274L807 288M278 451L260 466M871 359L893 361M807 288L791 299M172 465L176 477M434 462L417 472M119 564L140 564M371 353L378 367M991 260L1015 262M157 600L138 610M914 373L917 382M170 587L177 600M375 545L399 544M191 466L195 478M304 332L306 326M765 298L773 311M728 371L745 369M248 491L231 502M373 472L377 488M687 381L689 394M177 600L158 609M191 573L213 576M1023 212L1022 224M419 619L419 630M1015 203L1023 212M290 379L298 390M759 479L739 492M556 377L579 378M231 502L230 516M983 308L964 323M86 708L125 738M259 583L281 585M195 659L198 669M561 390L546 403M935 370L917 382M416 712L401 712M719 489L723 501M1150 278L1141 269M166 394L147 407M255 644L258 657M252 502L256 512M431 390L452 389M605 224L589 236M1003 310L987 321M772 189L794 192M29 498L25 493M444 485L464 484M241 669L245 683M392 288L409 282M880 396L865 409M892 156L871 167M280 404L304 405M589 236L574 245M491 508L474 522M422 496L447 498M409 282L426 276M956 92L972 94M737 404L718 419M128 418L150 421M519 522L500 533M854 226L875 226M159 748L150 751M432 511L448 508M972 94L980 111M792 484L776 492M1133 247L1140 260M547 343L524 354M844 420L865 421M542 533L524 545M209 636L229 633M155 433L158 444M1174 241L1182 250M1003 236L1025 237M467 676L472 664M776 492L760 501M946 265L955 276M450 683L439 687M1155 244L1161 257M394 728L377 720M504 544L486 559M331 537L352 546M808 476L796 469M1025 237L1050 234M488 640L508 643M1073 248L1094 246M270 443L256 452M295 438L314 439M750 190L751 201M377 720L361 712M161 352L171 359M1012 347L1017 356M407 449L389 462M569 557L549 570M742 428L764 431M125 762L141 768M1094 246L1112 246M505 352L510 366M257 573L259 583M168 457L172 465M188 455L208 454M62 426L70 411M981 385L977 369M324 464L331 473M634 572L620 583M622 438L642 438M1140 260L1161 257M304 594L286 609M352 368L335 378M394 728L401 712M188 455L191 466M143 370L155 370M324 582L328 596M195 478L178 493M105 468L125 468M416 712L398 700M807 288L829 289M701 585L708 597M1019 287L1020 295M250 622L229 633M997 392L1002 381M517 449L540 450M204 504L196 525M340 571L364 572M157 491L160 503M42 478L62 481M919 300L899 309M242 736L234 729M785 150L782 165M1041 285L1043 296M740 226L723 236M835 384L816 396M505 630L508 643M409 581L429 579M186 705L168 719M965 120L945 132M654 571L680 571M369 664L370 679M759 479L779 477M899 309L905 324M263 477L286 475M384 498L366 510M763 227L743 237M343 653L323 669M473 592L495 594M512 246L529 240M402 497L385 510M905 324L883 334M255 717L257 727M385 510L393 521M324 403L329 413M434 399L458 400M743 237L730 248M343 710L356 704M123 668L125 690M561 605L582 605M901 237L905 253M498 328L479 341M798 393L797 406M689 550L680 571M804 153L805 166M647 332L654 343M1042 155L1055 167M409 511L414 522M414 522L416 532M282 417L305 418M985 119L990 130M420 411L397 426M1100 198L1104 206M336 629L357 628M652 401L653 413M723 501L740 500M738 575L738 592M574 245L555 257M766 177L772 189M431 521L437 535M437 535L441 544M629 545L612 558M439 411L422 426M967 334L970 345M688 538L669 548M357 628L377 629M290 428L270 443M1003 165L1009 179M172 660L195 659M822 156L805 166M402 439L386 450M399 544L401 555M776 492L779 477M284 731L266 735M454 339L458 353M456 532L460 545M928 262L946 265M718 345L738 346M697 559L680 571M309 430L295 438M195 659L214 659M158 444L168 457M883 191L863 203M790 179L772 189M1095 260L1081 271M266 735L248 736M466 557L466 568M66 540L90 538M328 353L312 368M299 451L301 462M212 739L218 732M592 352L617 353M130 588L113 601M183 441L188 455M159 748L156 741M452 663L472 664M146 468L131 481M902 190L884 202M867 276L869 286M1120 259L1101 270M321 453L324 464M1104 206L1109 222M528 567L531 582M1037 358L1021 370M469 270L474 280M153 585L132 601M443 363L465 363M377 616L357 628M660 354L638 368M87 478L89 490M186 705L209 705M912 357L933 359M850 288L832 299M549 570L553 579M478 458L459 472M733 515L725 513M141 623L145 635M453 279L435 291M1043 296L1026 307M222 599L222 610M629 463L629 476M269 379L290 379M267 367L269 379M211 648L195 659M733 521L727 526M222 373L205 381M1060 201L1082 212M808 299L815 311M769 370L792 369M289 488L274 500M620 583L620 595M410 733L405 725M1026 307L1030 320M731 383L731 392M412 294L420 303M584 462L606 463M198 669L182 683M144 397L166 394M470 653L452 663M335 378L342 389M733 521L733 515M703 239L691 261M950 92L960 105M310 487L297 498M655 222L658 235M157 491L178 493M274 500L278 514M761 165L782 165M602 391L589 403M236 660L241 669M525 471L545 474M212 512L196 525M297 498L301 513M1045 309L1030 320M142 502L160 503M1050 319L1034 333M816 192L838 193M534 508L537 522M458 400L439 411M819 323L822 336M933 154L915 165M658 235L663 250M143 516L166 516M478 399L464 410M671 214L693 212M358 300L358 318M560 521L565 535M1050 234L1031 249M1168 233L1155 244M443 270L460 264M498 328L520 328M955 152L937 166M799 337L784 345M166 516L189 515M509 256L496 267M730 248L710 260M171 526L196 525M1024 135L1016 141M329 413L332 426M893 228L915 228M592 415L611 416M444 424L426 439M654 604L642 593M1135 234L1155 244M176 743L192 729M542 545L547 556M589 341L572 355M196 525L213 525M923 180L902 190M202 431L205 441M100 457L87 478M467 424L489 422M314 439L321 453M991 260L997 273M816 251L839 253M1036 189L1015 203M171 359L177 372M555 660L551 662M612 343L592 352M945 180L925 191M612 558L612 572M217 537L243 538M1066 233L1089 233M109 614L97 600M794 192L798 205M337 438L359 440M1015 262L1013 273M266 350L261 359M125 738L135 742M866 263L886 264M680 571L684 585M249 549L266 548M710 199L693 212M184 337L192 357M1133 247L1155 244M548 353L552 366M57 467L62 481M138 610L141 623M1013 273L996 286M867 276L889 274M125 644L134 661M290 730L296 715M317 558L336 559M347 595L331 608M399 364L381 376M772 465L779 477M135 742L138 755M239 478L222 491M738 575L724 587M389 462L397 474M957 299L963 312M444 485L422 496M850 288L869 286M696 574L684 585M461 306L445 315M290 622L273 634M157 384L144 397M384 570L403 569M371 595L349 606M733 515L723 501M877 369L896 382M699 180L707 191M453 279L474 280M298 390L320 391M229 708L236 716M263 477L248 491M202 490L204 504M211 718L192 729M1125 288L1150 278M945 132L931 145M754 382L774 382M808 299L832 299M422 496L432 511M486 306L471 316M877 385L859 397M290 693L273 706M448 581L473 579M387 653L389 664M412 294L435 291M147 407L168 409M222 491L231 502M236 716L218 732M517 388L521 401M629 393L648 391M945 323L948 333M473 579L493 582M249 703L236 716M515 592L537 594M580 222L570 235M609 404L592 415M865 409L884 408M546 234L563 228M393 521L372 533M447 498L432 511M367 401L375 414M928 337L908 348M50 527L54 532M537 594L558 591M682 511L667 525M464 410L467 424M718 419L741 420M846 158L851 169M695 330L699 346M416 532L399 544M964 323L948 333M448 508L452 522M619 248L624 259M819 323L838 323M708 525L688 538M141 623L163 622M1013 333L1035 344M377 629L400 629M332 426L337 438M178 540L182 553M741 420L762 419M871 156L871 167M597 424L614 425M799 337L822 336M669 548L653 560M738 346L721 359M482 412L467 424M400 629L419 630M358 427L359 440M614 425L638 426M833 178L838 193M1140 260L1141 269M499 341L505 352M689 550L673 560M763 345L784 345M872 442L872 430M39 512L29 498M236 660L258 657M938 96L950 92M468 438L453 450M494 438L512 435M460 545L466 557M947 189L952 201M230 737L212 739M1141 269L1122 283M371 353L352 368M122 575L105 589M634 355L660 354M170 587L157 600M443 558L466 557M191 466L176 477M702 356L707 370M140 682L160 681M434 462L422 483M363 451L371 464M891 286L893 301M386 450L407 449M373 472L354 485M177 372L183 385M192 585L177 600M499 280L502 290M290 379L277 391M419 619L400 629M1015 203L997 215M510 570L528 567M317 328L306 326M212 468L195 478M286 609L271 623M131 481L135 491M495 594L477 604M707 370L706 383M86 708L125 714M391 295L376 305M301 462L324 464M262 599L264 611M312 368L315 378M315 378L298 390M152 478L157 491M997 141L1016 141M649 210L630 221M887 114L898 119M565 645L549 629M376 305L382 317M921 118L940 119M239 478L263 477M1069 308L1070 318M957 299L981 299M241 669L225 680M275 645L258 657M572 291L594 295M62 426L50 442M876 300L876 312M354 485L337 500M856 131L863 145M904 108L921 118M696 224L703 239M202 490L222 491M750 162L761 165M796 383L798 393M805 166L829 168M382 317L361 331M1070 318L1054 330M942 309L963 312M574 498L554 510M206 396L230 393M263 671L245 683M146 709L150 718M150 718L153 733M685 599L708 597M185 501L204 504M671 394L652 401M521 401L528 413M945 323L964 323M271 623L290 622M881 133L863 145M1089 233L1094 246M844 336L845 348M703 239L707 249M150 760L150 751M928 337L948 333M125 644L151 649M611 416L597 424M303 526L285 535M1155 244L1140 260M528 629L549 629M331 537L332 545M1024 135L1042 155M1002 153L984 165M630 221L655 222M212 512L230 516M361 712L356 704M1151 223L1155 234M213 525L236 525M772 250L754 261M633 345L634 355M948 333L967 334M489 422L468 438M365 653L387 653M791 237L813 238M577 258L563 270M125 762L138 755M236 525L262 527M587 547L592 558M654 343L660 354M505 352L486 366M645 536L648 548M908 348L928 347M257 573L239 585M359 440L363 451M387 653L407 653M266 682L285 678M862 251L882 251M261 359L267 367M609 547L612 558M653 560L654 571M524 354L510 366M738 592L725 596M264 539L285 535M394 728L379 712M188 455L172 465M785 357L809 360M324 582L304 594M384 438L386 450M964 386L977 369M285 678L306 681M1060 270L1060 283M905 264L928 262M378 701L398 700M358 318L361 331M673 560L680 571M434 462L455 461M722 574L724 587M288 548L313 550M125 714L146 709M105 468L106 479M638 368L664 369M286 475L289 488M1041 285L1020 295M998 356L1000 369M782 213L763 227M129 775L125 762M105 589L113 601M205 381L206 396M331 618L336 629M469 376L491 378M642 593L627 606M1060 283L1043 296M999 299L1003 310M850 373L835 384M511 303L493 317M381 559L401 555M945 132L970 132M917 382L921 395M171 646L172 660M409 593L391 606M584 617L582 605M342 389L365 391M389 664L370 679M273 706L277 718M310 478L289 488M255 717L234 729M266 682L249 694M1020 295L1026 307M508 486L492 497M854 226L855 239M444 568L466 568M195 646L195 659M156 671L160 681M798 393L780 407M425 654L428 663M941 381L944 396M365 391L388 389M292 702L296 715M962 165L984 165M192 404L215 406M269 488L274 500M277 718L257 727M409 511L393 521M993 201L1015 203M876 300L893 301M492 497L491 508M987 321L992 335M985 119L970 132M337 500L362 500M515 583L531 582M451 651L452 663M816 396L797 406M652 401L635 413M215 406L238 404M905 407L923 405M431 521L416 532M763 227L784 225M54 532L61 529M1010 321L1013 333M967 334L950 348M341 510L366 510M904 108L921 102M676 406L653 413M503 414L508 423M82 751L125 738M776 492L759 479M452 522L437 535M762 419L782 418M456 532L441 544M918 239L941 238M992 335L970 345M663 250L668 258M711 549L716 563M367 524L393 521M840 459L824 467M528 413L531 425M376 426L384 438M782 418L805 418M910 156L915 165M638 426L658 426M477 531L460 545M212 739L192 729M941 238L966 238M393 521L414 522M183 441L168 457M784 345L764 360M392 531L416 532M397 426L402 439M321 453L301 462M658 426L679 430M512 435L517 449M877 178L883 191M469 270L453 279M1006 249L1031 249M415 354L421 366M79 457L79 466M416 532L437 535M27 481L28 463M238 466L239 478M549 570L531 582M993 189L993 201M955 276L977 284M496 267L474 280M537 435L558 437M435 353L443 363M1056 259L1077 260M267 367L247 381M169 575L153 585M239 585L242 597M792 456L796 469M441 544L460 545M486 559L508 556M458 617L461 627M1060 201L1060 212M600 377L625 380M431 447L453 450M935 288L938 301M671 214L676 224M287 366L269 379M1060 270L1081 271M412 294L398 304M358 318L382 317M1125 288L1105 281M222 491L212 512M335 378L320 391M508 556L530 558M260 466L239 478M349 326L358 327M297 645L299 658M273 634L255 644M954 285L957 299M655 222L634 235M441 471L422 483M693 212L696 224M346 462L371 464M435 291L420 303M1041 285L1060 283M360 379L342 389M661 307L648 321M478 618L461 627M572 567L591 569M283 669L285 678M676 224L658 235M160 681L161 696M297 498L278 514M371 464L389 462M402 484L402 497M124 662L134 661M420 303L422 316M1060 283L1084 283M999 299L1020 295M689 394L693 406M303 667L306 681M321 645L299 658M637 581L658 582M822 156L846 158M315 500L301 513M182 683L183 694M168 719L175 731M1127 220L1114 235M905 130L910 144M310 478L331 473M658 235L638 246M422 316L409 330M1020 295L1043 296M710 391L716 405M409 330L389 342M983 308L1003 310M966 178L985 179M321 512L324 524M926 132L931 145M197 420L220 416M269 488L289 488M212 739L211 718M1003 310L1026 307M332 709L335 690M565 399L568 413M987 321L1010 321M498 328L520 341M311 621L331 618M1135 234L1133 247M653 413L658 426M348 524L351 532M67 433L90 432M761 165L742 179M883 334L887 346M1010 321L1030 320M158 553L140 564M967 334L992 335M637 609L642 593M993 119L1001 119M331 618L354 617M151 649L171 646M531 425L537 435M372 533L375 545M785 430L805 433M624 259L628 269M675 344L677 357M992 335L1013 333M928 347L950 348M1015 262L997 273M171 646L195 646M538 664L551 662M407 653L425 654M805 433L826 431M662 441L684 440M1029 178L1036 189M699 346L702 356M230 737L234 729M628 269L611 280M548 353L532 365M253 563L232 573M1009 125L1001 119M950 348L970 345M230 453L238 466M425 654L451 651M684 440L704 443M290 730L277 718M200 346L192 357M561 450L582 448M572 355L552 366M320 572L302 584M827 360L850 359M389 462L373 472M327 680L347 678M1101 270L1105 281M132 601L138 610M964 386L944 396M716 563L722 574M561 450L566 461M478 458L502 462M582 448L603 450M572 291L551 303M888 434L872 430M388 580L371 595M980 111L960 105M686 369L707 370M491 378L475 389M168 637L171 646M413 460L397 474M1125 288L1085 300M331 473L333 485M168 719L190 718M1084 283L1063 295M824 217L809 225M897 372L896 382M502 462L523 460M594 295L574 306M247 381L250 395M358 318L376 305M456 594L458 606M222 491L204 504M513 375L536 379M444 641L425 654M353 476L354 485M1105 281L1088 294M306 681L309 690M85 404L102 408M960 105L940 119M441 471L459 472M574 306L579 319M123 668L133 670M62 426L86 420M536 379L556 377M839 395L843 409M204 504L212 512M428 663L413 676M32 445L50 442M980 155L1002 153M728 190L750 190M1063 295L1069 308M548 487L533 498M893 228L901 237M402 484L422 483M579 319L564 331M144 397L126 407M407 389L431 390M693 406L695 417M570 235L574 245M750 190L772 189M448 508L431 521M1036 199L1060 201M474 522L477 531M1105 338L1037 358M533 498L534 508M384 498L402 497M375 294L392 288M1013 333L1012 347M607 601L620 595M859 397L843 409M409 330L430 330M871 156L851 169M260 406L280 404M86 420L67 433M472 509L452 522M458 617L478 618M638 246L624 259M1060 201L1082 200M836 132L839 145M500 533L504 544M809 225L830 228M402 497L422 496M1034 333L1035 344M385 510L409 511M358 427L337 438M716 405L695 417M365 344L389 342M805 418L785 430M833 178L816 192M495 522L477 531M297 645L321 645M830 228L854 226M966 238L987 238M409 511L432 511M414 522L431 521M828 346L827 360M227 442L230 453M568 413L573 423M1112 246L1120 259M460 545L443 558M1161 257L1141 269M855 181L838 193M679 430L662 441M521 535L504 544M987 238L1003 236M517 268L522 283M1031 249L1052 247M779 263L761 272M140 564L146 574M431 521L452 522M437 535L456 532M702 356L686 369M363 451L346 462M953 357L974 359M535 255L537 271M558 437L561 450M537 271L543 280M654 604L649 606M1052 247L1073 248M458 353L465 363M499 280L483 292M129 775L141 768M213 576L218 586M456 532L477 531M249 361L247 381M974 359L998 356M386 450L371 464M280 463L286 475M809 370L831 373M161 696L183 694M227 563L253 563M477 258L469 270M480 354L486 366M1095 260L1120 259M522 283L502 290M312 368L290 379M212 468L202 490M281 585L284 598M483 544L504 544M152 478L135 491M503 618L505 630M301 462L310 478M831 373L850 373M379 712L401 712M284 598L264 611M330 366L315 378M1101 270L1120 269M483 292L486 306M547 556L569 557M406 379L407 389M525 617L528 629M876 300L856 311M317 631L297 645M133 733L135 742M668 378L687 381M904 108L898 119M996 286L999 299M796 383L774 397M738 213L740 226M696 224L678 237M1120 269L1141 269M482 471L464 484M1084 283L1105 281M150 718L133 733M612 572L634 572M323 669L327 680M358 641L365 653M153 733L156 741M277 391L260 406M768 156L761 165M542 391L561 390M719 225L703 239M1105 281L1122 283M471 316L471 328M347 668L347 678M477 258L495 252M126 407L110 417"/>
<path d="M170.3 467.0 L183.0 461.5 L205.5 444.8 L216.7 446.4 L237.5 481.5 L248.8 492.4 L258.6 502.3 L270.6 508.3 L282.7 510.0M294.7 513.8 L300.0 514.9 L321.0 525.8 L334.0 527.5 L349.4 522.5 L363.7 513.8M327.0 358.0 L358.0 351.0M629.0 514.0 L655.8 552.0 L677.0 570.6 L687.8 580.0M476.0 514.0 L456.0 591.0 L448.0 604.5 L431.4 618.5M420.0 624.8 L398.0 631.0 L347.5 613.4M328.4 617.0 L290.0 655.0 L260.0 665.4 L232.6 673.7M222.4 678.3 L180.7 689.4 L156.7 706.0 L143.7 708.0M949.0 126.0 L959.0 136.5 L978.3 156.7 L983.7 169.5 L1006.0 185.5 L1029.5 196.0 L1040.0 207.7 L1048.5 217.3 L1067.7 228.0 L1082.6 235.4 L1097.0 242.4M1121.0 241.0 L1142.0 241.8 L1167.8 246.0 L1177.4 251.3M1097.0 242.4 L1082.6 248.0 L1072.0 254.5 L1066.7 260.0 L1040.0 297.0 L1038.7 298.2 L1014.5 305.6 L982.0 314.0" stroke="#0a0aff" stroke-width="2.2" shape-rendering="auto" stroke-linejoin="round"/>
<rect x="144.5" y="481.0" width="48.0" height="13" fill="#f0f0f0" stroke="none"/>
<text x="146" y="491.5" font-family="Liberation Sans" font-style="italic" font-size="11" letter-spacing="-0.3" fill="#1414ff" stroke="none" shape-rendering="auto">A=112.13</text>
<rect x="283.5" y="503.5" width="15.5" height="13" fill="#f0f0f0" stroke="none"/>
<text x="285" y="514" font-family="Liberation Sans" font-style="italic" font-size="11" letter-spacing="-0.3" fill="#000" stroke="none" shape-rendering="auto">7R</text>
<rect x="342.5" y="490.5" width="15.5" height="13" fill="#f0f0f0" stroke="none"/>
<text x="344" y="501" font-family="Liberation Sans" font-style="italic" font-size="11" letter-spacing="-0.3" fill="#1414ff" stroke="none" shape-rendering="auto">A=</text>
<rect x="579.5" y="551.0" width="42.2" height="13" fill="#f0f0f0" stroke="none"/>
<text x="581" y="561.5" font-family="Liberation Sans" font-style="italic" font-size="11" letter-spacing="-0.3" fill="#1414ff" stroke="none" shape-rendering="auto">A=93.25</text>
<rect x="387.5" y="612.0" width="42.2" height="13" fill="#f0f0f0" stroke="none"/>
<text x="389" y="622.5" font-family="Liberation Sans" font-style="italic" font-size="11" letter-spacing="-0.3" fill="#1414ff" stroke="none" shape-rendering="auto">A=58.84</text>
<rect x="328.5" y="607.0" width="15.5" height="13" fill="#f0f0f0" stroke="none"/>
<text x="330" y="617.5" font-family="Liberation Sans" font-style="italic" font-size="11" letter-spacing="-0.3" fill="#000" stroke="none" shape-rendering="auto">8R</text>
<rect x="189.5" y="665.0" width="42.2" height="13" fill="#f0f0f0" stroke="none"/>
<text x="191" y="675.5" font-family="Liberation Sans" font-style="italic" font-size="11" letter-spacing="-0.3" fill="#1414ff" stroke="none" shape-rendering="auto">A=86.69</text>
<rect x="1097.5" y="234.0" width="21.2" height="13" fill="#f0f0f0" stroke="none"/>
<text x="1099" y="244.5" font-family="Liberation Sans" font-style="italic" font-size="11" letter-spacing="-0.3" fill="#000" stroke="none" shape-rendering="auto">10R</text>
<rect x="1177.5" y="244.0" width="15.5" height="13" fill="#f0f0f0" stroke="none"/>
<text x="1179" y="254.5" font-family="Liberation Sans" font-style="italic" font-size="11" letter-spacing="-0.3" fill="#000" stroke="none" shape-rendering="auto">1R</text>
<rect x="1111.5" y="261.5" width="42.2" height="13" fill="#f0f0f0" stroke="none"/>
<text x="1113" y="272" font-family="Liberation Sans" font-style="italic" font-size="11" letter-spacing="-0.3" fill="#1414ff" stroke="none" shape-rendering="auto">A=16.16</text>
<rect x="948.5" y="310.5" width="30.8" height="13" fill="#f0f0f0" stroke="none"/>
<text x="950" y="321" font-family="Liberation Sans" font-style="italic" font-size="11" letter-spacing="-0.3" fill="#1414ff" stroke="none" shape-rendering="auto">96.50</text>
<rect x="949.5" y="183.0" width="19.2" height="13" fill="#f0f0f0" stroke="none"/>
<text x="951" y="193.5" font-family="Liberation Sans" font-style="italic" font-size="11" letter-spacing="-0.3" fill="#1414ff" stroke="none" shape-rendering="auto">.63</text>
<rect x="281.5" y="509.0" width="3" height="3" fill="#ffc000" stroke="none"/>
<rect x="1095.5" y="240.9" width="3" height="3" fill="#ffc000" stroke="none"/>
<rect x="1175.9" y="249.8" width="3" height="3" fill="#ffc000" stroke="none"/>
<path d="M962.5 261.5 L998.5 248.5 L992.5 255 Z" fill="#000" stroke="#000" stroke-width="0.8" shape-rendering="crispEdges"/>
</svg>
<div id="dlg" class="a"></div>
<svg class="a" style="left:368px;top:93px" width="17" height="17" viewBox="0 0 17 17">
<circle cx="8.1" cy="8.1" r="7.1" fill="#fff" stroke="#168a5c" stroke-width="1.8"/>
<rect x="1" y="9.3" width="14.2" height="3" fill="#168a5c"/>
<path d="M8.1 3.4 L10.3 9.3 L5.9 9.3 Z" fill="#1b7a50"/>
</svg>
<div class="t" style="left:610.5px;top:94px;font-size:14.7px;line-height:17px;color:#1e2a3c;letter-spacing:0">Data Set Info</div>
<div class="a" style="left:912px;top:87px;width:31px;height:20px;background:#c75050"></div>
<svg class="a" style="left:912px;top:87px" width="31" height="20" viewBox="0 0 31 20"><path d="M12 6.5 L20 14 M20 6.5 L12 14" stroke="#fff" stroke-width="1.9"/></svg>
<div id="client" class="a"></div>

<div class="t" style="left:378px;top:128px">Data Set:</div>
<div class="g" style="left:377px;top:143px;width:246px;height:126px"><div class="gi"></div></div>
<div class="a" style="left:379px;top:145px;width:114px;height:18px;border-top:1px solid #fff;border-left:1px solid #fff;border-right:1px solid #696969;border-bottom:1px solid #696969"></div>
<div class="a" style="left:493px;top:145px;width:128px;height:18px;background:#fff;border-right:1px solid #a0a0a0;border-bottom:1px solid #a0a0a0"></div>
<div class="t" style="left:384px;top:148px">Name:</div>
<div class="t" style="left:497px;top:148px">elevation (elev)</div>
<div class="a" style="left:379px;top:163px;width:114px;height:18px;border-top:1px solid #fff;border-left:1px solid #fff;border-right:1px solid #696969;border-bottom:1px solid #696969"></div>
<div class="a" style="left:493px;top:163px;width:128px;height:18px;background:#f0f0f0;border-right:1px solid #a0a0a0;border-bottom:1px solid #a0a0a0"></div>
<div class="t" style="left:384px;top:166px">Number of time steps:</div>
<div class="t" style="left:497px;top:166px">1</div>
<div class="a" style="left:379px;top:181px;width:114px;height:18px;border-top:1px solid #fff;border-left:1px solid #fff;border-right:1px solid #696969;border-bottom:1px solid #696969"></div>
<div class="a" style="left:493px;top:181px;width:128px;height:18px;background:#f0f0f0;border-right:1px solid #a0a0a0;border-bottom:1px solid #a0a0a0"></div>
<div class="t" style="left:384px;top:184px">Min data set value:</div>
<div class="t" style="left:497px;top:184px">1072.054</div>
<div class="a" style="left:379px;top:199px;width:114px;height:18px;border-top:1px solid #fff;border-left:1px solid #fff;border-right:1px solid #696969;border-bottom:1px solid #696969"></div>
<div class="a" style="left:493px;top:199px;width:128px;height:18px;background:#f0f0f0;border-right:1px solid #a0a0a0;border-bottom:1px solid #a0a0a0"></div>
<div class="t" style="left:384px;top:202px">Max data set value:</div>
<div class="t" style="left:497px;top:202px">2399.429</div>
<div class="a" style="left:379px;top:217px;width:114px;height:18px;border-top:1px solid #fff;border-left:1px solid #fff;border-right:1px solid #696969;border-bottom:1px solid #696969"></div>
<div class="a" style="left:493px;top:217px;width:128px;height:18px;background:#f0f0f0;border-right:1px solid #a0a0a0;border-bottom:1px solid #a0a0a0"></div>
<div class="t" style="left:384px;top:220px">First time step time:</div>
<div class="t" style="left:497px;top:220px">0.0</div>
<div class="a" style="left:379px;top:235px;width:114px;height:18px;border-top:1px solid #fff;border-left:1px solid #fff;border-right:1px solid #696969;border-bottom:1px solid #696969"></div>
<div class="a" style="left:493px;top:235px;width:128px;height:18px;background:#f0f0f0;border-right:1px solid #a0a0a0;border-bottom:1px solid #a0a0a0"></div>
<div class="t" style="left:384px;top:238px">Last time step time:</div>
<div class="t" style="left:497px;top:238px">0.0</div>
<div class="a" style="left:377px;top:276px;width:13px;height:13px;border:1px solid #bcbcbc;background:#e6e6e6"></div>
<div class="t" style="left:394px;top:277px;color:#6d6d6d">Use dates/times</div>
<div class="t" style="left:378px;top:308px">Time Step:</div>
<div class="g" style="left:377px;top:339px;width:246px;height:153px"><div class="gi"></div></div>
<div class="a" style="left:379px;top:341px;width:242px;height:149px;overflow:hidden">
<div class="a" style="left:0;top:0px;width:104px;height:21px;border-top:1px solid #fff;border-left:1px solid #fff;border-right:1px solid #696969;border-bottom:1px solid #696969"></div>
<div class="a" style="left:104px;top:0px;width:121px;height:21px;border-right:1px solid #a0a0a0;border-bottom:1px solid #a0a0a0"></div>
<div class="t" style="left:5px;top:3.5px">Current time step:</div>
<div class="t" style="left:108px;top:3.5px">0.0</div>
<div class="a" style="left:0;top:21px;width:104px;height:22px;border-top:1px solid #fff;border-left:1px solid #fff;border-right:1px solid #696969;border-bottom:1px solid #696969"></div>
<div class="a" style="left:104px;top:21px;width:121px;height:22px;border-right:1px solid #a0a0a0;border-bottom:1px solid #a0a0a0"></div>
<div class="t" style="left:5px;top:25.5px">Number of values:</div>
<div class="t" style="left:108px;top:25.5px">1804</div>
<div class="a" style="left:0;top:43px;width:104px;height:22px;border-top:1px solid #fff;border-left:1px solid #fff;border-right:1px solid #696969;border-bottom:1px solid #696969"></div>
<div class="a" style="left:104px;top:43px;width:121px;height:22px;border-right:1px solid #a0a0a0;border-bottom:1px solid #a0a0a0"></div>
<div class="t" style="left:5px;top:47.5px">Min value:</div>
<div class="t" style="left:108px;top:47.5px">1072.054</div>
<div class="a" style="left:0;top:65px;width:104px;height:22px;border-top:1px solid #fff;border-left:1px solid #fff;border-right:1px solid #696969;border-bottom:1px solid #696969"></div>
<div class="a" style="left:104px;top:65px;width:121px;height:22px;border-right:1px solid #a0a0a0;border-bottom:1px solid #a0a0a0"></div>
<div class="t" style="left:5px;top:69.5px">Max value:</div>
<div class="t" style="left:108px;top:69.5px">2399.429</div>
<div class="a" style="left:0;top:87px;width:104px;height:22px;border-top:1px solid #fff;border-left:1px solid #fff;border-right:1px solid #696969;border-bottom:1px solid #696969"></div>
<div class="a" style="left:104px;top:87px;width:121px;height:22px;border-right:1px solid #a0a0a0;border-bottom:1px solid #a0a0a0"></div>
<div class="t" style="left:5px;top:91.5px">Range:</div>
<div class="t" style="left:108px;top:91.5px">1327.374</div>
<div class="a" style="left:0;top:109px;width:104px;height:22px;border-top:1px solid #fff;border-left:1px solid #fff;border-right:1px solid #696969;border-bottom:1px solid #696969"></div>
<div class="a" style="left:104px;top:109px;width:121px;height:22px;border-right:1px solid #a0a0a0;border-bottom:1px solid #a0a0a0"></div>
<div class="t" style="left:5px;top:113.5px">Mean:</div>
<div class="t" style="left:108px;top:113.5px">1436.885</div>
<div class="a" style="left:0;top:131px;width:104px;height:22px;border-top:1px solid #fff;border-left:1px solid #fff;border-right:1px solid #696969;border-bottom:1px solid #696969"></div>
<div class="a" style="left:104px;top:131px;width:121px;height:22px;border-right:1px solid #a0a0a0;border-bottom:1px solid #a0a0a0"></div>
<div class="t" style="left:5px;top:135.5px">Median:</div>
<div class="t" style="left:108px;top:135.5px">1386.966</div>
</div>
<div class="a" style="left:604px;top:341px;width:17px;height:149px;background:#f0f0f0"></div>
<div class="a" style="left:605px;top:357px;width:15px;height:98px;background:#cdcdcd"></div>
<svg class="a" style="left:604px;top:341px" width="17" height="149"><path d="M5 10 L8.5 6.5 L12 10" stroke="#606060" stroke-width="1.6" fill="none"/><path d="M5 138 L8.5 141.5 L12 138" stroke="#606060" stroke-width="1.6" fill="none"/></svg>
<svg class="a" style="left:633px;top:128px" width="300" height="279" viewBox="633 128 300 279" shape-rendering="crispEdges">
<rect x="633" y="128" width="299" height="278" fill="#a0a0a0"/>
<rect x="634" y="129" width="297" height="276" fill="#ececec"/>
<rect x="636" y="131" width="294" height="273" fill="#fff"/>
<rect x="652" y="342" width="269" height="37" fill="#f7f7f7"/>
<rect x="652" y="268" width="269" height="37" fill="#f7f7f7"/>
<rect x="652" y="194" width="269" height="37" fill="#f7f7f7"/>
<rect x="652" y="143" width="269" height="14" fill="#f7f7f7"/>
<rect x="653" y="340" width="11" height="39" fill="#000"/>
<rect x="654" y="342" width="8" height="37" fill="#00f53a"/>
<rect x="667" y="208" width="11" height="171" fill="#000"/>
<rect x="668" y="210" width="8" height="169" fill="#00f53a"/>
<rect x="680" y="152" width="11" height="227" fill="#000"/>
<rect x="681" y="154" width="8" height="225" fill="#00f53a"/>
<rect x="694" y="246" width="11" height="133" fill="#000"/>
<rect x="695" y="248" width="8" height="131" fill="#00f53a"/>
<rect x="707" y="235" width="11" height="144" fill="#000"/>
<rect x="708" y="237" width="8" height="142" fill="#00f53a"/>
<rect x="721" y="243" width="11" height="136" fill="#000"/>
<rect x="722" y="245" width="8" height="134" fill="#00f53a"/>
<rect x="734" y="289" width="11" height="90" fill="#000"/>
<rect x="735" y="291" width="8" height="88" fill="#00f53a"/>
<rect x="747" y="299" width="11" height="80" fill="#000"/>
<rect x="748" y="301" width="8" height="78" fill="#00f53a"/>
<rect x="761" y="291" width="11" height="88" fill="#000"/>
<rect x="762" y="293" width="8" height="86" fill="#00f53a"/>
<rect x="774" y="280" width="11" height="99" fill="#000"/>
<rect x="775" y="282" width="8" height="97" fill="#00f53a"/>
<rect x="788" y="328" width="11" height="51" fill="#000"/>
<rect x="789" y="330" width="8" height="49" fill="#00f53a"/>
<rect x="801" y="346" width="11" height="33" fill="#000"/>
<rect x="802" y="348" width="8" height="31" fill="#00f53a"/>
<rect x="815" y="360" width="11" height="19" fill="#000"/>
<rect x="816" y="362" width="8" height="17" fill="#00f53a"/>
<rect x="828" y="368" width="11" height="11" fill="#000"/>
<rect x="829" y="370" width="8" height="9" fill="#00f53a"/>
<rect x="841" y="369" width="11" height="10" fill="#000"/>
<rect x="842" y="371" width="8" height="8" fill="#00f53a"/>
<rect x="855" y="371" width="11" height="8" fill="#000"/>
<rect x="856" y="373" width="8" height="6" fill="#00f53a"/>
<rect x="868" y="372" width="11" height="7" fill="#000"/>
<rect x="869" y="374" width="8" height="5" fill="#00f53a"/>
<rect x="882" y="367" width="11" height="12" fill="#000"/>
<rect x="883" y="369" width="8" height="10" fill="#00f53a"/>
<rect x="895" y="371" width="11" height="8" fill="#000"/>
<rect x="896" y="373" width="8" height="6" fill="#00f53a"/>
<rect x="909" y="372" width="11" height="7" fill="#000"/>
<rect x="910" y="374" width="8" height="5" fill="#00f53a"/>
<rect x="652" y="143" width="269" height="1" fill="#000"/>
<rect x="652" y="143" width="1" height="236" fill="#000"/>
<rect x="920" y="143" width="1" height="236" fill="#000"/>
<rect x="921" y="145" width="2" height="236" fill="#808080"/>
<rect x="652" y="378" width="269" height="1" fill="#000"/>
<rect x="654" y="379" width="269" height="2" fill="#808080"/>
<rect x="650" y="379" width="5" height="1" fill="#000"/>
<rect x="653" y="372" width="2" height="1" fill="#000"/>
<rect x="653" y="364" width="2" height="1" fill="#000"/>
<rect x="653" y="357" width="2" height="1" fill="#000"/>
<rect x="653" y="350" width="2" height="1" fill="#000"/>
<rect x="650" y="342" width="5" height="1" fill="#000"/>
<rect x="653" y="335" width="2" height="1" fill="#000"/>
<rect x="653" y="328" width="2" height="1" fill="#000"/>
<rect x="653" y="320" width="2" height="1" fill="#000"/>
<rect x="653" y="313" width="2" height="1" fill="#000"/>
<rect x="650" y="305" width="5" height="1" fill="#000"/>
<rect x="653" y="298" width="2" height="1" fill="#000"/>
<rect x="653" y="290" width="2" height="1" fill="#000"/>
<rect x="653" y="283" width="2" height="1" fill="#000"/>
<rect x="653" y="276" width="2" height="1" fill="#000"/>
<rect x="650" y="268" width="5" height="1" fill="#000"/>
<rect x="653" y="261" width="2" height="1" fill="#000"/>
<rect x="653" y="254" width="2" height="1" fill="#000"/>
<rect x="653" y="246" width="2" height="1" fill="#000"/>
<rect x="653" y="239" width="2" height="1" fill="#000"/>
<rect x="650" y="231" width="5" height="1" fill="#000"/>
<rect x="653" y="224" width="2" height="1" fill="#000"/>
<rect x="653" y="216" width="2" height="1" fill="#000"/>
<rect x="653" y="209" width="2" height="1" fill="#000"/>
<rect x="653" y="202" width="2" height="1" fill="#000"/>
<rect x="650" y="194" width="5" height="1" fill="#000"/>
<rect x="653" y="187" width="2" height="1" fill="#000"/>
<rect x="653" y="180" width="2" height="1" fill="#000"/>
<rect x="653" y="172" width="2" height="1" fill="#000"/>
<rect x="653" y="165" width="2" height="1" fill="#000"/>
<rect x="650" y="157" width="5" height="1" fill="#000"/>
<rect x="672" y="375" width="1" height="7" fill="#000"/>
<rect x="686" y="375" width="1" height="7" fill="#000"/>
<rect x="699" y="375" width="1" height="7" fill="#000"/>
<rect x="713" y="375" width="1" height="7" fill="#000"/>
<rect x="726" y="375" width="1" height="7" fill="#000"/>
<rect x="739" y="375" width="1" height="7" fill="#000"/>
<rect x="753" y="375" width="1" height="7" fill="#000"/>
<rect x="766" y="375" width="1" height="7" fill="#000"/>
<rect x="780" y="375" width="1" height="7" fill="#000"/>
<rect x="793" y="375" width="1" height="7" fill="#000"/>
<rect x="807" y="375" width="1" height="7" fill="#000"/>
<rect x="820" y="375" width="1" height="7" fill="#000"/>
<rect x="833" y="375" width="1" height="7" fill="#000"/>
<rect x="847" y="375" width="1" height="7" fill="#000"/>
<rect x="860" y="375" width="1" height="7" fill="#000"/>
<rect x="874" y="375" width="1" height="7" fill="#000"/>
<rect x="887" y="375" width="1" height="7" fill="#000"/>
<rect x="901" y="375" width="1" height="7" fill="#000"/>
<rect x="914" y="375" width="1" height="7" fill="#000"/>
</svg>
<div class="t" style="left:764px;top:132px;font-family:'Liberation Serif';font-size:8px;line-height:10px;letter-spacing:0">Histogram</div>
<div class="t" style="left:647.5px;top:376.3px;font-size:5.4px;line-height:6px;letter-spacing:0">0</div>
<div class="t" style="left:644.2px;top:339.3px;font-size:5.4px;line-height:6px;letter-spacing:0">50</div>
<div class="t" style="left:641.2px;top:302.3px;font-size:5.4px;line-height:6px;letter-spacing:0">100</div>
<div class="t" style="left:641.2px;top:265.3px;font-size:5.4px;line-height:6px;letter-spacing:0">150</div>
<div class="t" style="left:641.2px;top:228.3px;font-size:5.4px;line-height:6px;letter-spacing:0">200</div>
<div class="t" style="left:641.2px;top:191.3px;font-size:5.4px;line-height:6px;letter-spacing:0">250</div>
<div class="t" style="left:641.2px;top:154.3px;font-size:5.4px;line-height:6px;letter-spacing:0">300</div>
<div class="t" style="left:648.3px;top:382px;font-size:5.4px;line-height:6px;letter-spacing:0">1072.05</div>
<div class="t" style="left:675.2px;top:382px;font-size:5.4px;line-height:6px;letter-spacing:0">1204.79</div>
<div class="t" style="left:702.0px;top:382px;font-size:5.4px;line-height:6px;letter-spacing:0">1337.53</div>
<div class="t" style="left:728.9px;top:382px;font-size:5.4px;line-height:6px;letter-spacing:0">1470.27</div>
<div class="t" style="left:755.7px;top:382px;font-size:5.4px;line-height:6px;letter-spacing:0">1603.00</div>
<div class="t" style="left:782.6px;top:382px;font-size:5.4px;line-height:6px;letter-spacing:0">1735.74</div>
<div class="t" style="left:809.5px;top:382px;font-size:5.4px;line-height:6px;letter-spacing:0">1868.48</div>
<div class="t" style="left:836.3px;top:382px;font-size:5.4px;line-height:6px;letter-spacing:0">2001.22</div>
<div class="t" style="left:863.2px;top:382px;font-size:5.4px;line-height:6px;letter-spacing:0">2133.95</div>
<div class="t" style="left:890.0px;top:382px;font-size:5.4px;line-height:6px;letter-spacing:0">2266.69</div>
<div class="t" style="left:661.7px;top:388px;font-size:5.4px;line-height:6px;letter-spacing:0">1138.42</div>
<div class="t" style="left:688.6px;top:388px;font-size:5.4px;line-height:6px;letter-spacing:0">1271.16</div>
<div class="t" style="left:715.5px;top:388px;font-size:5.4px;line-height:6px;letter-spacing:0">1403.90</div>
<div class="t" style="left:742.3px;top:388px;font-size:5.4px;line-height:6px;letter-spacing:0">1536.64</div>
<div class="t" style="left:769.2px;top:388px;font-size:5.4px;line-height:6px;letter-spacing:0">1669.37</div>
<div class="t" style="left:796.0px;top:388px;font-size:5.4px;line-height:6px;letter-spacing:0">1802.11</div>
<div class="t" style="left:822.9px;top:388px;font-size:5.4px;line-height:6px;letter-spacing:0">1934.85</div>
<div class="t" style="left:849.8px;top:388px;font-size:5.4px;line-height:6px;letter-spacing:0">2067.59</div>
<div class="t" style="left:876.6px;top:388px;font-size:5.4px;line-height:6px;letter-spacing:0">2200.32</div>
<div class="t" style="left:903.5px;top:388px;font-size:5.4px;line-height:6px;letter-spacing:0">2333.06</div>
<div class="t" style="left:621.5px;top:256.5px;width:32px;height:7px;text-align:center;font-family:'Liberation Sans';font-weight:bold;font-size:6.6px;line-height:7px;letter-spacing:0;transform:rotate(-90deg)">Frequency</div>
<div class="btn" style="left:633px;top:412px;width:112px;height:21px">View Values...</div>
<div class="btn" style="left:633px;top:440px;width:112px;height:21px;border-color:#d5d5d5;background:#f4f4f4;color:#838383">Edit Inactive Flags...</div>
<div class="t" style="left:758px;top:419px">Number of Intervals:</div>
<div class="a" style="left:858px;top:414px;width:60px;height:20px;background:#fff;border:1px solid #abadb3"></div>
<div class="t" style="left:862px;top:418px">20</div>
<div class="btn" style="left:634px;top:474px;width:73px;height:21px">Help...</div>
<div class="btn" style="left:762px;top:474px;width:73px;height:21px;border-color:#3399ff">OK</div>
<div class="btn" style="left:847px;top:474px;width:73px;height:21px">Cancel</div>
<svg class="a" style="left:930px;top:495px" width="10" height="10"><g fill="#a8a8a8"><rect x="7" y="2" width="2" height="2"/><rect x="4" y="5" width="2" height="2"/><rect x="7" y="5" width="2" height="2"/><rect x="1" y="8" width="2" height="2"/><rect x="4" y="8" width="2" height="2"/><rect x="7" y="8" width="2" height="2"/></g></svg>
</body></html>
